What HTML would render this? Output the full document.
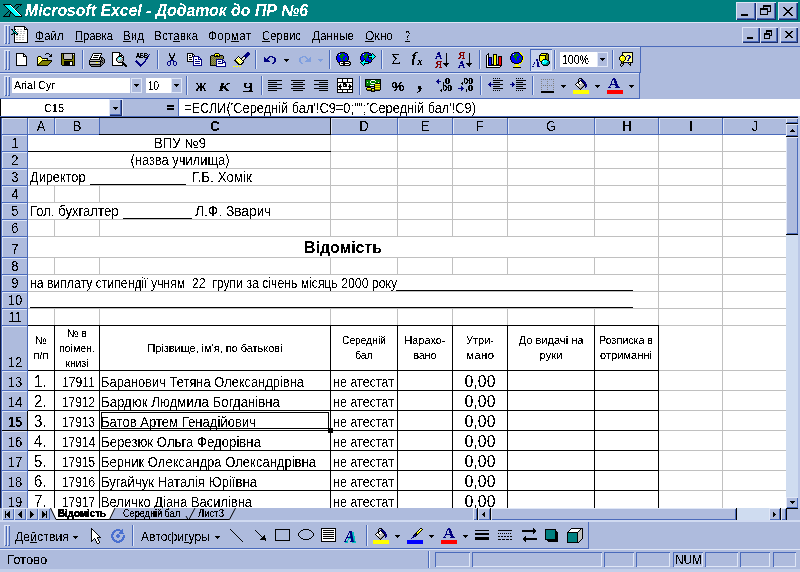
<!DOCTYPE html>
<html><head><meta charset="utf-8"><title>Microsoft Excel</title>
<style>
html,body{margin:0;padding:0;}
body{width:800px;height:572px;overflow:hidden;background:#aebbdd;position:relative;font-family:"Liberation Sans", sans-serif;color:#000;}
#w{position:absolute;left:0;top:0;width:800px;height:572px;overflow:hidden;}
#w div,#w span.t,#w svg{position:absolute;}
span.t{white-space:pre;}
#w .gt{left:0;top:118px;width:786px;height:390px;overflow:hidden;}
#w .ot{left:0;top:0;width:800px;height:572px;}
.tf{left:0;top:0;width:100%;height:100%;filter:url(#th);}
.tf.s{filter:url(#ths);}
.tf.x{filter:url(#thx);}
u{text-decoration:underline;}
</style></head><body><div id="w">
<svg width="0" height="0" style="left:0;top:0"><filter id="th" x="0" y="0" width="100%" height="100%" color-interpolation-filters="sRGB"><feComponentTransfer><feFuncA type="discrete" tableValues="0 1"/></feComponentTransfer></filter><filter id="thx" x="0" y="0" width="100%" height="100%" color-interpolation-filters="sRGB"><feComponentTransfer><feFuncA type="discrete" tableValues="0 0 0 1 1 1 1 1"/></feComponentTransfer></filter><filter id="ths" x="0" y="0" width="100%" height="100%" color-interpolation-filters="sRGB"><feComponentTransfer><feFuncA type="discrete" tableValues="0 0 0 0 0 0 0 0 0 1 1 1 1 1 1 1 1 1 1 1"/></feComponentTransfer></filter></svg>
<div style="left:0px;top:0px;width:800px;height:22px;background:#008080;"></div>
<div style="left:736px;top:2px;width:20px;height:18px;background:#aebbdd;box-shadow:inset 1px 1px 0 #dfe6f6, inset -1px -1px 0 #1c2c66, inset -2px -2px 0 #4a6abb;"></div>
<div style="left:756px;top:2px;width:20px;height:18px;background:#aebbdd;box-shadow:inset 1px 1px 0 #dfe6f6, inset -1px -1px 0 #1c2c66, inset -2px -2px 0 #4a6abb;"></div>
<div style="left:778px;top:2px;width:20px;height:18px;background:#aebbdd;box-shadow:inset 1px 1px 0 #dfe6f6, inset -1px -1px 0 #1c2c66, inset -2px -2px 0 #4a6abb;"></div>
<div style="left:742px;top:27px;width:18px;height:16px;background:#aebbdd;box-shadow:inset 1px 1px 0 #dfe6f6, inset -1px -1px 0 #1c2c66, inset -2px -2px 0 #4a6abb;"></div>
<div style="left:760px;top:27px;width:18px;height:16px;background:#aebbdd;box-shadow:inset 1px 1px 0 #dfe6f6, inset -1px -1px 0 #1c2c66, inset -2px -2px 0 #4a6abb;"></div>
<div style="left:780px;top:27px;width:18px;height:16px;background:#aebbdd;box-shadow:inset 1px 1px 0 #dfe6f6, inset -1px -1px 0 #1c2c66, inset -2px -2px 0 #4a6abb;"></div>
<div style="left:0px;top:22px;width:800px;height:1px;background:#dfe6f6;"></div>
<div style="left:0px;top:46px;width:800px;height:1px;background:#4a6abb;"></div>
<div style="left:0px;top:47px;width:641px;height:1px;background:#dfe6f6;"></div>
<div style="left:4px;top:25px;width:3px;height:19px;background:#aebbdd;box-shadow:inset 1px 1px 0 #dfe6f6, inset -1px -1px 0 #4a6abb;"></div>
<div style="left:7px;top:25px;width:3px;height:19px;background:#aebbdd;box-shadow:inset 1px 1px 0 #dfe6f6, inset -1px -1px 0 #4a6abb;"></div>
<div style="left:0px;top:72px;width:641px;height:1px;background:#4a6abb;"></div>
<div style="left:0px;top:73px;width:640px;height:1px;background:#dfe6f6;"></div>
<div style="left:640px;top:47px;width:1px;height:26px;background:#4a6abb;"></div>
<div style="left:0px;top:98px;width:640px;height:1px;background:#4a6abb;"></div>
<div style="left:639px;top:73px;width:1px;height:26px;background:#4a6abb;"></div>
<div style="left:4px;top:50px;width:3px;height:20px;background:#aebbdd;box-shadow:inset 1px 1px 0 #dfe6f6, inset -1px -1px 0 #4a6abb;"></div>
<div style="left:7px;top:50px;width:3px;height:20px;background:#aebbdd;box-shadow:inset 1px 1px 0 #dfe6f6, inset -1px -1px 0 #4a6abb;"></div>
<div style="left:4px;top:76px;width:3px;height:20px;background:#aebbdd;box-shadow:inset 1px 1px 0 #dfe6f6, inset -1px -1px 0 #4a6abb;"></div>
<div style="left:7px;top:76px;width:3px;height:20px;background:#aebbdd;box-shadow:inset 1px 1px 0 #dfe6f6, inset -1px -1px 0 #4a6abb;"></div>
<div style="left:82px;top:50px;width:1px;height:19px;background:#4a6abb;"></div>
<div style="left:83px;top:50px;width:1px;height:19px;background:#dfe6f6;"></div>
<div style="left:157px;top:50px;width:1px;height:19px;background:#4a6abb;"></div>
<div style="left:158px;top:50px;width:1px;height:19px;background:#dfe6f6;"></div>
<div style="left:255px;top:50px;width:1px;height:19px;background:#4a6abb;"></div>
<div style="left:256px;top:50px;width:1px;height:19px;background:#dfe6f6;"></div>
<div style="left:329px;top:50px;width:1px;height:19px;background:#4a6abb;"></div>
<div style="left:330px;top:50px;width:1px;height:19px;background:#dfe6f6;"></div>
<div style="left:381px;top:50px;width:1px;height:19px;background:#4a6abb;"></div>
<div style="left:382px;top:50px;width:1px;height:19px;background:#dfe6f6;"></div>
<div style="left:479px;top:50px;width:1px;height:19px;background:#4a6abb;"></div>
<div style="left:480px;top:50px;width:1px;height:19px;background:#dfe6f6;"></div>
<div style="left:554px;top:50px;width:1px;height:19px;background:#4a6abb;"></div>
<div style="left:555px;top:50px;width:1px;height:19px;background:#dfe6f6;"></div>
<div style="left:612px;top:50px;width:1px;height:19px;background:#4a6abb;"></div>
<div style="left:613px;top:50px;width:1px;height:19px;background:#dfe6f6;"></div>
<div style="left:186px;top:76px;width:1px;height:19px;background:#4a6abb;"></div>
<div style="left:187px;top:76px;width:1px;height:19px;background:#dfe6f6;"></div>
<div style="left:261px;top:76px;width:1px;height:19px;background:#4a6abb;"></div>
<div style="left:262px;top:76px;width:1px;height:19px;background:#dfe6f6;"></div>
<div style="left:359px;top:76px;width:1px;height:19px;background:#4a6abb;"></div>
<div style="left:360px;top:76px;width:1px;height:19px;background:#dfe6f6;"></div>
<div style="left:480px;top:76px;width:1px;height:19px;background:#4a6abb;"></div>
<div style="left:481px;top:76px;width:1px;height:19px;background:#dfe6f6;"></div>
<div style="left:532px;top:76px;width:1px;height:19px;background:#4a6abb;"></div>
<div style="left:533px;top:76px;width:1px;height:19px;background:#dfe6f6;"></div>
<div style="left:12px;top:78px;width:118px;height:15px;background:#fff;"></div>
<div style="left:131px;top:78px;width:11px;height:15px;background:#aebbdd;box-shadow:inset 0 0 0 1px #dfe6f6;"></div>
<svg style="left:134px;top:84px" width="5" height="3" viewBox="0 0 5 3" shape-rendering="crispEdges" ><path d="M0 0h5v1H0zM1 1h3v1H1zM2 2h1v1H2z" fill="#000"/></svg>
<div style="left:146px;top:78px;width:25px;height:15px;background:#fff;"></div>
<div style="left:171px;top:78px;width:11px;height:15px;background:#aebbdd;box-shadow:inset 0 0 0 1px #dfe6f6;"></div>
<svg style="left:174px;top:84px" width="5" height="3" viewBox="0 0 5 3" shape-rendering="crispEdges" ><path d="M0 0h5v1H0zM1 1h3v1H1zM2 2h1v1H2z" fill="#000"/></svg>
<div style="left:560px;top:52px;width:37px;height:15px;background:#fff;"></div>
<div style="left:597px;top:52px;width:11px;height:15px;background:#aebbdd;box-shadow:inset 0 0 0 1px #dfe6f6;"></div>
<svg style="left:600px;top:58px" width="5" height="3" viewBox="0 0 5 3" shape-rendering="crispEdges" ><path d="M0 0h5v1H0zM1 1h3v1H1zM2 2h1v1H2z" fill="#000"/></svg>
<svg style="left:16px;top:53px" width="11" height="13" viewBox="0 0 11 13" shape-rendering="crispEdges"><path fill="#000" d="M0 0h8v1H0zM0 1h1v1H0zM7 1h2v1H7zM0 2h1v1H0zM7 2h1v1H7zM9 2h1v1H9zM0 3h1v1H0zM7 3h4v1H7zM0 4h1v1H0zM10 4h1v1H10zM0 5h1v1H0zM10 5h1v1H10zM0 6h1v1H0zM10 6h1v1H10zM0 7h1v1H0zM10 7h1v1H10zM0 8h1v1H0zM10 8h1v1H10zM0 9h1v1H0zM10 9h1v1H10zM0 10h1v1H0zM10 10h1v1H10zM0 11h1v1H0zM10 11h1v1H10zM0 12h11v1H0z"/><path fill="#fff" d="M1 1h6v1H1zM1 2h6v1H1zM8 2h1v1H8zM1 3h6v1H1zM1 4h9v1H1zM1 5h9v1H1zM1 6h9v1H1zM1 7h9v1H1zM1 8h9v1H1zM1 9h9v1H1zM1 10h9v1H1zM1 11h9v1H1z"/></svg>
<svg style="left:37px;top:53px" width="16" height="13" viewBox="0 0 16 13" shape-rendering="crispEdges"><path fill="#000" d="M9 0h3v1H9zM8 1h1v1H8zM12 1h1v1H12zM14 1h1v1H14zM13 2h2v1H13zM1 3h3v1H1zM12 3h3v1H12zM0 4h1v1H0zM4 4h1v1H4zM0 5h1v1H0zM5 5h6v1H5zM0 6h1v1H0zM10 6h1v1H10zM0 7h1v1H0zM5 7h10v1H5zM0 8h1v1H0zM4 8h1v1H4zM14 8h1v1H14zM0 9h1v1H0zM3 9h1v1H3zM13 9h1v1H13zM0 10h1v1H0zM2 10h1v1H2zM12 10h1v1H12zM0 11h2v1H0zM11 11h1v1H11zM0 12h11v1H0z"/><path fill="#ffff00" d="M1 4h1v1H1zM3 4h1v1H3zM2 5h1v1H2zM4 5h1v1H4zM1 6h1v1H1zM3 6h1v1H3zM5 6h1v1H5zM7 6h1v1H7zM9 6h1v1H9zM2 7h1v1H2zM4 7h1v1H4zM1 8h1v1H1zM3 8h1v1H3zM2 9h1v1H2zM1 10h1v1H1z"/><path fill="#fff" d="M2 4h1v1H2zM1 5h1v1H1zM3 5h1v1H3zM2 6h1v1H2zM4 6h1v1H4zM6 6h1v1H6zM8 6h1v1H8zM1 7h1v1H1zM3 7h1v1H3zM2 8h1v1H2zM1 9h1v1H1z"/><path fill="#808000" d="M5 8h9v1H5zM4 9h9v1H4zM3 10h9v1H3zM2 11h9v1H2z"/></svg>
<svg style="left:61px;top:53px" width="14" height="13" viewBox="0 0 14 13" shape-rendering="crispEdges"><path fill="#000" d="M0 0h14v1H0zM0 1h1v1H0zM2 1h1v1H2zM11 1h1v1H11zM13 1h1v1H13zM0 2h1v1H0zM2 2h1v1H2zM11 2h1v1H11zM13 2h1v1H13zM0 3h1v1H0zM2 3h1v1H2zM11 3h1v1H11zM13 3h1v1H13zM0 4h1v1H0zM2 4h1v1H2zM11 4h1v1H11zM13 4h1v1H13zM0 5h1v1H0zM2 5h1v1H2zM11 5h1v1H11zM13 5h1v1H13zM0 6h1v1H0zM3 6h8v1H3zM13 6h1v1H13zM0 7h1v1H0zM13 7h1v1H13zM0 8h1v1H0zM3 8h9v1H3zM13 8h1v1H13zM0 9h1v1H0zM3 9h6v1H3zM11 9h1v1H11zM13 9h1v1H13zM0 10h1v1H0zM3 10h6v1H3zM11 10h1v1H11zM13 10h1v1H13zM0 11h1v1H0zM3 11h6v1H3zM11 11h1v1H11zM13 11h1v1H13zM1 12h13v1H1z"/><path fill="#808000" d="M1 1h1v1H1zM1 2h1v1H1zM12 2h1v1H12zM1 3h1v1H1zM12 3h1v1H12zM1 4h1v1H1zM12 4h1v1H12zM1 5h1v1H1zM12 5h1v1H12zM1 6h2v1H1zM11 6h2v1H11zM1 7h12v1H1zM1 8h2v1H1zM12 8h1v1H12zM1 9h2v1H1zM12 9h1v1H12zM1 10h2v1H1zM12 10h1v1H12zM1 11h2v1H1zM12 11h1v1H12z"/><path fill="#c0c0c0" d="M3 1h8v1H3zM3 2h8v1H3zM3 3h8v1H3zM3 4h8v1H3zM3 5h8v1H3z"/><path fill="#fff" d="M12 1h1v1H12zM9 9h2v1H9zM9 10h2v1H9zM9 11h2v1H9z"/></svg>
<svg style="left:89px;top:53px" width="16" height="14" viewBox="0 0 16 14" shape-rendering="crispEdges"><path fill="#000" d="M4 0h9v1H4zM3 1h1v1H3zM12 1h1v1H12zM3 2h1v1H3zM5 2h5v1H5zM11 2h1v1H11zM2 3h1v1H2zM11 3h1v1H11zM2 4h1v1H2zM4 4h5v1H4zM10 4h4v1H10zM1 5h1v1H1zM10 5h1v1H10zM12 5h1v1H12zM14 5h1v1H14zM1 6h10v1H1zM12 6h1v1H12zM15 6h1v1H15zM0 7h1v1H0zM11 7h1v1H11zM13 7h1v1H13zM15 7h1v1H15zM0 8h13v1H0zM15 8h1v1H15zM0 9h1v1H0zM11 9h1v1H11zM13 9h1v1H13zM15 9h1v1H15zM0 10h1v1H0zM11 10h1v1H11zM14 10h1v1H14zM0 11h12v1H0zM13 11h1v1H13zM1 12h1v1H1zM11 12h2v1H11zM2 13h10v1H2z"/><path fill="#fff" d="M4 1h8v1H4zM4 2h1v1H4zM10 2h1v1H10zM3 3h8v1H3zM3 4h1v1H3zM9 4h1v1H9zM2 5h8v1H2z"/><path fill="#c0c0c0" d="M11 5h1v1H11zM11 6h1v1H11zM1 7h10v1H1zM1 9h6v1H1zM9 9h2v1H9zM1 10h10v1H1z"/><path fill="#808080" d="M13 5h1v1H13zM13 6h2v1H13zM12 7h1v1H12zM14 7h1v1H14zM13 8h2v1H13zM12 9h1v1H12zM14 9h1v1H14zM12 10h2v1H12zM12 11h1v1H12zM2 12h9v1H2z"/><path fill="#ffff00" d="M7 9h2v1H7z"/></svg>
<svg style="left:112px;top:52px" width="16" height="15" viewBox="0 0 16 15" shape-rendering="crispEdges"><path fill="#000" d="M0 0h8v1H0zM0 1h1v1H0zM7 1h2v1H7zM0 2h1v1H0zM7 2h1v1H7zM9 2h1v1H9zM0 3h1v1H0zM7 3h4v1H7zM0 4h1v1H0zM6 4h4v1H6zM11 4h1v1H11zM0 5h1v1H0zM5 5h1v1H5zM10 5h2v1H10zM0 6h1v1H0zM4 6h1v1H4zM11 6h1v1H11zM0 7h1v1H0zM4 7h1v1H4zM11 7h1v1H11zM0 8h1v1H0zM4 8h1v1H4zM11 8h1v1H11zM0 9h1v1H0zM5 9h1v1H5zM10 9h1v1H10zM0 10h1v1H0zM6 10h6v1H6zM0 11h1v1H0zM10 11h3v1H10zM0 12h1v1H0zM10 12h4v1H10zM0 13h11v1H0zM12 13h3v1H12zM13 14h2v1H13z"/><path fill="#fff" d="M1 1h6v1H1zM1 2h6v1H1zM8 2h1v1H8zM1 3h6v1H1zM1 4h5v1H1zM10 4h1v1H10zM1 5h4v1H1zM8 5h1v1H8zM1 6h3v1H1zM7 6h1v1H7zM1 7h3v1H1zM6 7h1v1H6zM1 8h3v1H1zM1 9h4v1H1zM1 10h5v1H1zM1 11h9v1H1zM1 12h9v1H1z"/><path fill="#808080" d="M6 5h1v1H6zM5 6h1v1H5zM10 7h1v1H10zM9 8h1v1H9zM8 9h1v1H8z"/><path fill="#00ffff" d="M7 5h1v1H7zM6 6h1v1H6zM8 6h1v1H8zM7 7h1v1H7z"/><path fill="#c0c0c0" d="M9 5h1v1H9zM9 6h2v1H9zM5 7h1v1H5zM8 7h2v1H8zM5 8h4v1H5zM10 8h1v1H10zM6 9h2v1H6zM9 9h1v1H9z"/></svg>
<svg style="left:135px;top:53px" width="15" height="14" viewBox="0 0 15 14" shape-rendering="crispEdges"><path fill="#000080" d="M14 1h1v1H14zM13 2h1v1H13zM12 3h2v1H12zM12 4h1v1H12zM11 5h2v1H11zM10 6h2v1H10zM1 7h1v1H1zM10 7h1v1H10zM0 8h3v1H0zM9 8h2v1H9zM1 9h3v1H1zM8 9h2v1H8zM2 10h3v1H2zM7 10h2v1H7zM3 11h5v1H3zM4 12h3v1H4zM5 13h1v1H5z"/></svg>
<svg style="left:167px;top:53px" width="10" height="13" viewBox="0 0 10 13" shape-rendering="crispEdges"><path fill="#000" d="M2 0h1v1H2zM7 0h1v1H7zM2 1h1v1H2zM7 1h1v1H7zM2 2h2v1H2zM6 2h2v1H6zM3 3h1v1H3zM6 3h1v1H6zM3 4h4v1H3zM4 5h2v1H4zM4 6h2v1H4z"/><path fill="#000080" d="M3 7h4v1H3zM1 8h3v1H1zM6 8h3v1H6zM0 9h1v1H0zM3 9h1v1H3zM6 9h1v1H6zM9 9h1v1H9zM0 10h1v1H0zM3 10h1v1H3zM6 10h1v1H6zM9 10h1v1H9zM0 11h1v1H0zM3 11h1v1H3zM6 11h1v1H6zM9 11h1v1H9zM1 12h2v1H1zM7 12h2v1H7z"/></svg>
<svg style="left:187px;top:53px" width="15" height="13" viewBox="0 0 15 13" shape-rendering="crispEdges"><path fill="#000" d="M0 0h6v1H0zM0 1h1v1H0zM5 1h2v1H5zM0 2h1v1H0zM2 2h2v1H2zM5 2h1v1H5zM7 2h1v1H7zM0 3h1v1H0zM5 3h1v1H5zM0 4h1v1H0zM2 4h3v1H2zM0 5h1v1H0zM0 6h1v1H0zM2 6h3v1H2zM0 7h1v1H0zM0 8h6v1H0z"/><path fill="#fff" d="M1 1h4v1H1zM1 2h1v1H1zM4 2h1v1H4zM6 2h1v1H6zM1 3h4v1H1zM1 4h1v1H1zM5 4h1v1H5zM7 4h4v1H7zM1 5h5v1H1zM7 5h4v1H7zM12 5h1v1H12zM1 6h1v1H1zM5 6h1v1H5zM7 6h1v1H7zM10 6h1v1H10zM1 7h5v1H1zM7 7h7v1H7zM7 8h1v1H7zM13 8h1v1H13zM7 9h7v1H7zM7 10h1v1H7zM13 10h1v1H13zM7 11h7v1H7z"/><path fill="#000080" d="M6 3h6v1H6zM6 4h1v1H6zM11 4h2v1H11zM6 5h1v1H6zM11 5h1v1H11zM13 5h1v1H13zM6 6h1v1H6zM8 6h2v1H8zM11 6h4v1H11zM6 7h1v1H6zM14 7h1v1H14zM6 8h1v1H6zM8 8h5v1H8zM14 8h1v1H14zM6 9h1v1H6zM14 9h1v1H14zM6 10h1v1H6zM8 10h5v1H8zM14 10h1v1H14zM6 11h1v1H6zM14 11h1v1H14zM6 12h9v1H6z"/></svg>
<svg style="left:210px;top:53px" width="16" height="14" viewBox="0 0 16 14" shape-rendering="crispEdges"><path fill="#000" d="M5 0h4v1H5zM4 1h1v1H4zM9 1h1v1H9zM1 2h4v1H1zM6 2h2v1H6zM9 2h4v1H9zM0 3h1v1H0zM4 3h6v1H4zM13 3h1v1H13zM0 4h1v1H0zM13 4h1v1H13zM0 5h1v1H0zM13 5h1v1H13zM0 6h1v1H0zM0 7h1v1H0zM0 8h1v1H0zM0 9h1v1H0zM0 10h1v1H0zM0 11h1v1H0zM0 12h6v1H0z"/><path fill="#ffff00" d="M5 1h4v1H5zM5 2h1v1H5zM8 2h1v1H8z"/><path fill="#808080" d="M1 3h1v1H1zM3 3h1v1H3zM10 3h1v1H10zM12 3h1v1H12zM2 4h1v1H2zM4 4h1v1H4zM6 4h1v1H6zM8 4h1v1H8zM10 4h1v1H10zM12 4h1v1H12zM1 5h1v1H1zM3 5h1v1H3zM5 5h1v1H5zM7 5h1v1H7zM9 5h1v1H9zM11 5h1v1H11zM2 6h1v1H2zM4 6h1v1H4zM1 7h1v1H1zM3 7h1v1H3zM5 7h1v1H5zM2 8h1v1H2zM4 8h1v1H4zM1 9h1v1H1zM3 9h1v1H3zM5 9h1v1H5zM2 10h1v1H2zM4 10h1v1H4zM1 11h1v1H1zM3 11h1v1H3zM5 11h1v1H5z"/><path fill="#808000" d="M2 3h1v1H2zM11 3h1v1H11zM1 4h1v1H1zM3 4h1v1H3zM5 4h1v1H5zM7 4h1v1H7zM9 4h1v1H9zM11 4h1v1H11zM2 5h1v1H2zM4 5h1v1H4zM6 5h1v1H6zM8 5h1v1H8zM10 5h1v1H10zM12 5h1v1H12zM1 6h1v1H1zM3 6h1v1H3zM5 6h1v1H5zM2 7h1v1H2zM4 7h1v1H4zM1 8h1v1H1zM3 8h1v1H3zM5 8h1v1H5zM2 9h1v1H2zM4 9h1v1H4zM1 10h1v1H1zM3 10h1v1H3zM5 10h1v1H5zM2 11h1v1H2zM4 11h1v1H4z"/><path fill="#000080" d="M6 6h7v1H6zM6 7h1v1H6zM12 7h2v1H12zM6 8h1v1H6zM8 8h3v1H8zM12 8h1v1H12zM14 8h1v1H14zM6 9h1v1H6zM12 9h4v1H12zM6 10h1v1H6zM8 10h5v1H8zM15 10h1v1H15zM6 11h1v1H6zM15 11h1v1H15zM6 12h1v1H6zM15 12h1v1H15zM6 13h10v1H6z"/><path fill="#fff" d="M7 7h5v1H7zM7 8h1v1H7zM11 8h1v1H11zM13 8h1v1H13zM7 9h5v1H7zM7 10h1v1H7zM13 10h2v1H13zM7 11h8v1H7zM7 12h8v1H7z"/></svg>
<svg style="left:233px;top:52px" width="17" height="16" viewBox="0 0 17 16" shape-rendering="crispEdges"><path fill="#000080" d="M14 0h2v1H14zM13 1h4v1H13zM12 2h5v1H12zM11 3h5v1H11zM11 4h4v1H11zM13 5h1v1H13z"/><path fill="#000" d="M5 4h1v1H5zM10 4h1v1H10zM4 5h1v1H4zM6 5h1v1H6zM9 5h1v1H9zM12 5h1v1H12zM3 6h1v1H3zM7 6h2v1H7zM12 6h1v1H12zM2 7h1v1H2zM8 7h1v1H8zM11 7h1v1H11zM1 8h2v1H1zM9 8h2v1H9zM2 9h2v1H2zM10 9h1v1H10zM3 10h2v1H3zM9 10h2v1H9zM4 11h2v1H4zM8 11h2v1H8zM5 12h4v1H5z"/><path fill="#fff" d="M5 5h1v1H5zM11 5h1v1H11zM4 6h1v1H4zM6 6h1v1H6zM10 6h1v1H10zM3 7h1v1H3zM5 7h1v1H5zM7 7h1v1H7zM9 7h1v1H9zM4 8h1v1H4zM6 8h1v1H6zM8 8h1v1H8zM5 9h1v1H5zM7 9h1v1H7zM9 9h1v1H9zM6 10h1v1H6zM8 10h1v1H8zM7 11h1v1H7z"/><path fill="#c0c0c0" d="M10 5h1v1H10zM9 6h1v1H9zM11 6h1v1H11zM10 7h1v1H10z"/><path fill="#ffff00" d="M5 6h1v1H5zM4 7h1v1H4zM6 7h1v1H6zM3 8h1v1H3zM5 8h1v1H5zM7 8h1v1H7zM4 9h1v1H4zM6 9h1v1H6zM8 9h1v1H8zM5 10h1v1H5zM7 10h1v1H7zM6 11h1v1H6zM0 14h2v1H0zM3 14h2v1H3zM6 14h2v1H6z"/></svg>
<svg style="left:264px;top:56px" width="13" height="8" viewBox="0 0 13 8" shape-rendering="crispEdges"><path fill="#000080" d="M5 0h4v1H5zM0 1h1v1H0zM4 1h2v1H4zM8 1h3v1H8zM0 2h2v1H0zM3 2h2v1H3zM10 2h2v1H10zM0 3h4v1H0zM10 3h2v1H10zM0 4h5v1H0zM10 4h2v1H10zM0 5h6v1H0zM10 5h2v1H10zM9 6h2v1H9zM8 7h2v1H8z"/></svg>
<svg style="left:284px;top:59px" width="5" height="3" viewBox="0 0 5 3" shape-rendering="crispEdges" ><path d="M0 0h5v1H0zM1 1h3v1H1zM2 2h1v1H2z" fill="#000"/></svg>
<svg style="left:298px;top:56px" width="13" height="8" viewBox="0 0 13 8" shape-rendering="crispEdges"><path fill="#7f9fdf" d="M4 0h4v1H4zM2 1h3v1H2zM7 1h2v1H7zM12 1h1v1H12zM1 2h2v1H1zM8 2h2v1H8zM11 2h2v1H11zM1 3h2v1H1zM9 3h4v1H9zM1 4h2v1H1zM8 4h5v1H8zM1 5h2v1H1zM7 5h6v1H7zM2 6h2v1H2zM3 7h2v1H3z"/></svg>
<svg style="left:318px;top:59px" width="5" height="3" viewBox="0 0 5 3" shape-rendering="crispEdges" ><path d="M0 0h5v1H0zM1 1h3v1H1zM2 2h1v1H2z" fill="#7f9fdf"/></svg>
<svg style="left:336px;top:52px" width="15" height="14" viewBox="0 0 15 14" shape-rendering="crispEdges"><path fill="#000" d="M4 0h5v1H4zM2 1h2v1H2zM9 1h2v1H9zM1 2h1v1H1zM11 2h1v1H11zM1 3h1v1H1zM11 3h1v1H11zM0 4h1v1H0zM12 4h1v1H12zM0 5h1v1H0zM12 5h1v1H12zM0 6h1v1H0zM12 6h1v1H12zM0 7h1v1H0zM12 7h1v1H12zM1 8h1v1H1zM11 8h1v1H11zM1 9h1v1H1zM4 9h10v1H4zM2 10h2v1H2zM7 10h2v1H7zM13 10h2v1H13zM3 11h1v1H3zM5 11h8v1H5zM14 11h1v1H14zM3 12h1v1H3zM7 12h2v1H7zM13 12h2v1H13zM4 13h10v1H4z"/><path fill="#0000ff" d="M4 1h2v1H4zM7 1h2v1H7zM2 2h1v1H2zM4 2h1v1H4zM8 2h3v1H8zM2 3h2v1H2zM9 3h2v1H9zM1 4h2v1H1zM7 4h5v1H7zM1 5h3v1H1zM7 5h3v1H7zM11 5h1v1H11zM1 6h4v1H1zM6 6h3v1H6zM11 6h1v1H11zM1 7h4v1H1zM7 7h2v1H7zM11 7h1v1H11zM2 8h4v1H2zM7 8h4v1H7zM2 9h2v1H2z"/><path fill="#008000" d="M6 1h1v1H6zM5 2h3v1H5zM4 3h5v1H4zM3 4h4v1H3zM4 5h3v1H4zM10 5h1v1H10zM5 6h1v1H5zM9 6h2v1H9zM5 7h2v1H5zM9 7h2v1H9zM6 8h1v1H6z"/><path fill="#fff" d="M3 2h1v1H3zM4 10h3v1H4zM9 10h4v1H9zM4 11h1v1H4zM13 11h1v1H13zM4 12h3v1H4zM9 12h4v1H9z"/></svg>
<svg style="left:360px;top:52px" width="16" height="14" viewBox="0 0 16 14" shape-rendering="crispEdges"><path fill="#000" d="M4 0h5v1H4zM2 1h2v1H2zM9 1h2v1H9zM12 1h1v1H12zM1 2h1v1H1zM11 2h1v1H11zM13 2h1v1H13zM1 3h1v1H1zM8 3h4v1H8zM14 3h1v1H14zM0 4h1v1H0zM8 4h1v1H8zM15 4h1v1H15zM0 5h1v1H0zM8 5h4v1H8zM14 5h1v1H14zM0 6h1v1H0zM11 6h1v1H11zM13 6h1v1H13zM0 7h1v1H0zM4 7h1v1H4zM12 7h1v1H12zM1 8h1v1H1zM3 8h1v1H3zM5 8h1v1H5zM11 8h1v1H11zM1 9h2v1H1zM5 9h4v1H5zM11 9h1v1H11zM0 10h1v1H0zM8 10h3v1H8zM1 11h1v1H1zM4 11h5v1H4zM2 12h1v1H2zM4 12h1v1H4zM3 13h1v1H3z"/><path fill="#0000ff" d="M4 1h2v1H4zM7 1h2v1H7zM2 2h1v1H2zM4 2h1v1H4zM8 2h3v1H8zM2 3h2v1H2zM1 4h2v1H1zM7 4h1v1H7zM1 5h3v1H1zM7 5h1v1H7zM1 6h4v1H1zM6 6h3v1H6zM1 7h3v1H1zM6 7h3v1H6zM11 7h1v1H11zM2 8h1v1H2zM6 8h5v1H6zM9 9h2v1H9z"/><path fill="#008000" d="M6 1h1v1H6zM5 2h3v1H5zM4 3h4v1H4zM3 4h4v1H3zM4 5h3v1H4zM5 6h1v1H5zM9 6h2v1H9zM5 7h1v1H5zM9 7h2v1H9z"/><path fill="#fff" d="M3 2h1v1H3z"/><path fill="#00ffff" d="M12 2h1v1H12zM12 3h2v1H12zM9 4h6v1H9zM12 5h2v1H12zM12 6h1v1H12zM4 8h1v1H4zM3 9h2v1H3zM1 10h7v1H1zM2 11h2v1H2zM3 12h1v1H3z"/></svg>
<svg style="left:443px;top:53px" width="6" height="14" viewBox="0 0 6 14" shape-rendering="crispEdges"><path fill="#000" d="M3 0h1v1H3zM3 1h1v1H3zM3 2h1v1H3zM3 3h1v1H3zM3 4h1v1H3zM3 5h1v1H3zM3 6h1v1H3zM3 7h1v1H3zM3 8h1v1H3zM3 9h1v1H3zM0 10h6v1H0zM1 11h4v1H1zM2 12h2v1H2zM3 13h1v1H3z"/></svg>
<svg style="left:466px;top:53px" width="6" height="14" viewBox="0 0 6 14" shape-rendering="crispEdges"><path fill="#000" d="M3 0h1v1H3zM3 1h1v1H3zM3 2h1v1H3zM3 3h1v1H3zM3 4h1v1H3zM3 5h1v1H3zM3 6h1v1H3zM3 7h1v1H3zM3 8h1v1H3zM3 9h1v1H3zM0 10h6v1H0zM1 11h4v1H1zM2 12h2v1H2zM3 13h1v1H3z"/></svg>
<svg style="left:486px;top:53px" width="16" height="15" viewBox="0 0 16 15" shape-rendering="crispEdges"><path fill="#000" d="M2 0h1v1H2zM1 1h2v1H1zM7 1h4v1H7zM0 2h1v1H0zM2 2h1v1H2zM7 2h1v1H7zM10 2h1v1H10zM0 3h1v1H0zM2 3h1v1H2zM7 3h1v1H7zM10 3h1v1H10zM12 3h4v1H12zM0 4h1v1H0zM2 4h4v1H2zM7 4h1v1H7zM10 4h1v1H10zM12 4h1v1H12zM15 4h1v1H15zM0 5h1v1H0zM2 5h1v1H2zM5 5h1v1H5zM7 5h1v1H7zM10 5h1v1H10zM12 5h1v1H12zM15 5h1v1H15zM0 6h1v1H0zM2 6h1v1H2zM5 6h1v1H5zM7 6h1v1H7zM10 6h1v1H10zM12 6h1v1H12zM15 6h1v1H15zM0 7h1v1H0zM2 7h1v1H2zM5 7h1v1H5zM7 7h1v1H7zM10 7h1v1H10zM12 7h1v1H12zM15 7h1v1H15zM0 8h1v1H0zM2 8h1v1H2zM5 8h1v1H5zM7 8h1v1H7zM10 8h1v1H10zM12 8h1v1H12zM15 8h1v1H15zM0 9h1v1H0zM2 9h1v1H2zM5 9h1v1H5zM7 9h1v1H7zM10 9h1v1H10zM12 9h1v1H12zM15 9h1v1H15zM0 10h1v1H0zM2 10h1v1H2zM5 10h1v1H5zM7 10h1v1H7zM10 10h1v1H10zM12 10h1v1H12zM15 10h1v1H15zM0 11h1v1H0zM2 11h1v1H2zM5 11h3v1H5zM10 11h3v1H10zM15 11h1v1H15zM0 12h1v1H0zM2 12h14v1H2zM0 13h1v1H0zM14 13h1v1H14zM0 14h14v1H0z"/><path fill="#fff" d="M1 2h1v1H1zM1 3h1v1H1zM1 4h1v1H1zM1 5h1v1H1zM1 6h1v1H1zM1 7h1v1H1zM1 8h1v1H1zM1 9h1v1H1zM1 10h1v1H1zM1 11h1v1H1zM1 12h1v1H1zM1 13h13v1H1z"/><path fill="#ffff00" d="M8 2h2v1H8zM8 3h2v1H8zM8 4h2v1H8zM8 5h2v1H8zM8 6h2v1H8zM8 7h2v1H8zM8 8h2v1H8zM8 9h2v1H8zM8 10h2v1H8zM8 11h2v1H8z"/><path fill="#ff0000" d="M13 4h2v1H13zM13 5h2v1H13zM13 6h2v1H13zM13 7h2v1H13zM13 8h2v1H13zM13 9h2v1H13zM13 10h2v1H13zM13 11h2v1H13z"/><path fill="#0000ff" d="M3 5h2v1H3zM3 6h2v1H3zM3 7h2v1H3zM3 8h2v1H3zM3 9h2v1H3zM3 10h2v1H3zM3 11h2v1H3z"/></svg>
<svg style="left:510px;top:52px" width="14" height="16" viewBox="0 0 14 16" shape-rendering="crispEdges"><path fill="#000" d="M4 0h5v1H4zM2 1h2v1H2zM9 1h1v1H9zM1 2h1v1H1zM10 2h1v1H10zM1 3h1v1H1zM11 3h1v1H11zM0 4h1v1H0zM12 4h1v1H12zM0 5h1v1H0zM12 5h1v1H12zM0 6h1v1H0zM12 6h1v1H12zM0 7h1v1H0zM12 7h1v1H12zM1 8h1v1H1zM11 8h1v1H11zM1 9h1v1H1zM11 9h1v1H11zM2 10h2v1H2zM9 10h2v1H9zM4 11h5v1H4zM3 15h8v1H3z"/><path fill="#ffff00" d="M10 0h1v1H10zM10 1h2v1H10zM11 2h1v1H11zM12 3h1v1H12zM13 4h1v1H13zM13 5h1v1H13zM13 6h1v1H13zM13 7h1v1H13zM12 8h1v1H12zM12 9h1v1H12zM11 10h1v1H11zM9 11h2v1H9zM5 12h4v1H5zM6 13h2v1H6zM4 14h6v1H4z"/><path fill="#0000ff" d="M4 1h2v1H4zM7 1h2v1H7zM2 2h1v1H2zM4 2h1v1H4zM8 2h2v1H8zM2 3h2v1H2zM9 3h2v1H9zM1 4h2v1H1zM7 4h5v1H7zM1 5h3v1H1zM7 5h3v1H7zM11 5h1v1H11zM1 6h4v1H1zM6 6h3v1H6zM11 6h1v1H11zM1 7h4v1H1zM7 7h2v1H7zM11 7h1v1H11zM2 8h4v1H2zM7 8h4v1H7zM2 9h9v1H2zM4 10h5v1H4z"/><path fill="#008000" d="M6 1h1v1H6zM5 2h3v1H5zM4 3h5v1H4zM3 4h4v1H3zM4 5h3v1H4zM10 5h1v1H10zM5 6h1v1H5zM9 6h2v1H9zM5 7h2v1H5zM9 7h2v1H9zM6 8h1v1H6z"/><path fill="#fff" d="M3 2h1v1H3z"/></svg>
<div style="left:530px;top:49px;width:22px;height:22px;background:#c6d1ec;box-shadow:inset 1px 1px 0 #4a6abb, inset -1px -1px 0 #dfe6f6;"></div>
<svg style="left:534px;top:53px" width="16" height="13" viewBox="0 0 16 13" shape-rendering="crispEdges"><path fill="#000" d="M7 0h7v1H7zM6 1h1v1H6zM12 1h1v1H12zM14 1h1v1H14zM5 2h7v1H5zM14 2h1v1H14zM5 3h1v1H5zM11 3h1v1H11zM14 3h1v1H14zM5 4h1v1H5zM11 4h1v1H11zM14 4h1v1H14zM5 5h1v1H5zM11 5h1v1H11zM14 5h1v1H14zM5 6h1v1H5zM9 6h4v1H9zM14 6h1v1H14zM5 7h1v1H5zM8 7h1v1H8zM13 7h2v1H13zM6 8h2v1H6zM15 8h1v1H15zM7 9h1v1H7zM15 9h1v1H15zM7 10h1v1H7zM15 10h1v1H15zM8 11h1v1H8zM14 11h1v1H14zM9 12h5v1H9z"/><path fill="#ffff00" d="M7 1h5v1H7zM6 3h5v1H6zM6 4h5v1H6zM6 5h5v1H6zM6 6h3v1H6zM6 7h2v1H6z"/><path fill="#808000" d="M13 1h1v1H13zM12 2h2v1H12zM12 3h2v1H12zM12 4h2v1H12zM12 5h2v1H12zM13 6h1v1H13z"/><path fill="#00ffff" d="M9 7h4v1H9zM8 8h1v1H8zM10 8h4v1H10zM8 9h5v1H8zM8 10h4v1H8z"/><path fill="#fff" d="M9 8h1v1H9z"/><path fill="#008080" d="M14 8h1v1H14zM13 9h2v1H13zM12 10h3v1H12zM9 11h5v1H9z"/></svg>
<svg style="left:619px;top:52px" width="15" height="15" viewBox="0 0 15 15" shape-rendering="crispEdges"><path fill="#000" d="M3 0h11v1H3zM3 1h1v1H3zM13 1h1v1H13zM3 2h1v1H3zM13 2h1v1H13zM2 3h3v1H2zM13 3h1v1H13zM1 4h1v1H1zM5 4h1v1H5zM13 4h1v1H13zM0 5h1v1H0zM6 5h1v1H6zM13 5h1v1H13zM0 6h1v1H0zM6 6h1v1H6zM13 6h1v1H13zM0 7h1v1H0zM6 7h1v1H6zM13 7h1v1H13zM1 8h1v1H1zM5 8h1v1H5zM13 8h1v1H13zM2 9h1v1H2zM4 9h1v1H4zM13 9h1v1H13zM2 10h1v1H2zM4 10h10v1H4zM2 11h3v1H2zM9 11h1v1H9zM11 11h1v1H11zM1 12h1v1H1zM4 12h1v1H4zM10 12h2v1H10zM1 13h1v1H1zM3 13h1v1H3zM11 13h1v1H11zM2 14h1v1H2z"/><path fill="#ffff99" d="M4 1h9v1H4zM4 2h9v1H4zM5 3h8v1H5zM6 4h7v1H6zM7 5h6v1H7zM7 6h6v1H7zM7 7h6v1H7zM6 8h7v1H6zM5 9h8v1H5zM10 11h1v1H10z"/><path fill="#ffff00" d="M2 4h3v1H2zM1 5h1v1H1zM3 5h3v1H3zM1 6h5v1H1zM1 7h5v1H1zM2 8h3v1H2z"/><path fill="#fff" d="M2 5h1v1H2z"/><path fill="#808000" d="M3 9h1v1H3zM3 10h1v1H3z"/></svg>
<div style="left:243px;top:91px;width:10px;height:1px;background:#000;"></div>
<svg style="left:268px;top:80px" width="14" height="11" viewBox="0 0 14 11" shape-rendering="crispEdges"><path fill="#000" d="M0 0h14v1H0zM0 2h9v1H0zM0 4h14v1H0zM0 6h9v1H0zM0 8h14v1H0zM0 10h9v1H0z"/></svg>
<svg style="left:291px;top:80px" width="14" height="11" viewBox="0 0 14 11" shape-rendering="crispEdges"><path fill="#000" d="M0 0h14v1H0zM2 2h10v1H2zM0 4h14v1H0zM2 6h10v1H2zM0 8h14v1H0zM2 10h10v1H2z"/></svg>
<svg style="left:314px;top:80px" width="14" height="11" viewBox="0 0 14 11" shape-rendering="crispEdges"><path fill="#000" d="M0 0h14v1H0zM5 2h9v1H5zM0 4h14v1H0zM5 6h9v1H5zM0 8h14v1H0zM5 10h9v1H5z"/></svg>
<svg style="left:337px;top:78px" width="16" height="15" viewBox="0 0 16 15" shape-rendering="crispEdges"><path fill="#000" d="M0 0h16v1H0zM0 1h1v1H0zM5 1h1v1H5zM10 1h1v1H10zM15 1h1v1H15zM0 2h1v1H0zM5 2h1v1H5zM10 2h1v1H10zM15 2h1v1H15zM0 3h1v1H0zM5 3h1v1H5zM10 3h1v1H10zM15 3h1v1H15zM0 4h16v1H0zM0 5h1v1H0zM15 5h1v1H15zM0 6h1v1H0zM3 6h1v1H3zM12 6h1v1H12zM15 6h1v1H15zM0 7h1v1H0zM2 7h2v1H2zM12 7h2v1H12zM15 7h1v1H15zM0 8h5v1H0zM11 8h5v1H11zM0 9h1v1H0zM2 9h2v1H2zM12 9h2v1H12zM15 9h1v1H15zM0 10h1v1H0zM3 10h1v1H3zM12 10h1v1H12zM15 10h1v1H15zM0 11h16v1H0zM0 12h1v1H0zM5 12h1v1H5zM10 12h1v1H10zM15 12h1v1H15zM0 13h1v1H0zM5 13h1v1H5zM10 13h1v1H10zM15 13h1v1H15zM0 14h16v1H0z"/><path fill="#fff" d="M1 1h4v1H1zM6 1h4v1H6zM11 1h4v1H11zM1 2h4v1H1zM6 2h4v1H6zM11 2h4v1H11zM1 3h4v1H1zM6 3h4v1H6zM11 3h4v1H11zM1 5h14v1H1zM1 6h2v1H1zM4 6h8v1H4zM13 6h2v1H13zM1 7h1v1H1zM4 7h8v1H4zM14 7h1v1H14zM5 8h6v1H5zM1 9h1v1H1zM4 9h8v1H4zM14 9h1v1H14zM1 10h2v1H1zM4 10h8v1H4zM13 10h2v1H13zM1 12h4v1H1zM6 12h4v1H6zM11 12h4v1H11zM1 13h4v1H1zM6 13h4v1H6zM11 13h4v1H11z"/></svg>
<svg style="left:365px;top:79px" width="16" height="13" viewBox="0 0 16 13" shape-rendering="crispEdges"><path fill="#000" d="M0 0h16v1H0zM0 1h1v1H0zM15 1h1v1H15zM0 2h1v1H0zM15 2h1v1H15zM0 3h1v1H0zM15 3h1v1H15zM0 4h1v1H0zM11 4h5v1H11zM0 5h1v1H0zM9 5h1v1H9zM15 5h1v1H15zM0 6h1v1H0zM9 6h1v1H9zM15 6h1v1H15zM0 7h10v1H0zM15 7h1v1H15zM2 8h4v1H2zM9 8h1v1H9zM15 8h1v1H15zM1 9h1v1H1zM6 9h4v1H6zM15 9h1v1H15zM1 10h1v1H1zM6 10h1v1H6zM9 10h1v1H9zM15 10h1v1H15zM2 11h5v1H2zM9 11h6v1H9zM6 12h4v1H6z"/><path fill="#008000" d="M1 1h5v1H1zM10 1h5v1H10zM1 2h4v1H1zM6 2h4v1H6zM11 2h4v1H11zM1 3h1v1H1zM3 3h2v1H3zM6 3h7v1H6zM14 3h1v1H14zM1 4h5v1H1zM10 4h1v1H10zM1 5h8v1H1zM1 6h4v1H1z"/><path fill="#fff" d="M6 1h4v1H6zM5 2h1v1H5zM10 2h1v1H10zM2 3h1v1H2zM5 3h1v1H5zM13 3h1v1H13zM6 4h4v1H6zM5 6h4v1H5z"/><path fill="#ffff00" d="M10 5h5v1H10zM10 7h5v1H10zM2 9h4v1H2zM10 9h5v1H10zM7 10h2v1H7z"/><path fill="#808000" d="M10 6h5v1H10zM10 8h5v1H10zM2 10h4v1H2zM10 10h5v1H10zM7 11h2v1H7z"/></svg>
<svg style="left:436px;top:79px" width="6" height="5" viewBox="0 0 6 5" shape-rendering="crispEdges"><path fill="#000080" d="M2 0h1v1H2zM1 1h2v1H1zM0 2h5v1H0zM1 3h2v1H1zM2 4h1v1H2z"/></svg>
<svg style="left:458px;top:86px" width="6" height="5" viewBox="0 0 6 5" shape-rendering="crispEdges"><path fill="#000080" d="M3 0h1v1H3zM3 1h2v1H3zM0 2h6v1H0zM3 3h2v1H3zM3 4h1v1H3z"/></svg>
<svg style="left:487px;top:78px" width="16" height="14" viewBox="0 0 16 14" shape-rendering="crispEdges"><path fill="#000" d="M6 0h1v1H6zM8 0h1v1H8zM10 0h1v1H10zM12 0h1v1H12zM6 2h10v1H6zM6 4h7v1H6zM7 6h9v1H7zM6 8h7v1H6zM6 10h10v1H6zM6 12h1v1H6zM8 12h1v1H8zM10 12h1v1H10zM12 12h1v1H12z"/><path fill="#000080" d="M3 4h1v1H3zM2 5h2v1H2zM1 6h6v1H1zM2 7h2v1H2zM3 8h1v1H3z"/></svg>
<svg style="left:510px;top:78px" width="16" height="14" viewBox="0 0 16 14" shape-rendering="crispEdges"><path fill="#000" d="M6 0h1v1H6zM8 0h1v1H8zM10 0h1v1H10zM12 0h1v1H12zM6 2h10v1H6zM6 4h7v1H6zM6 6h10v1H6zM6 8h7v1H6zM6 10h10v1H6zM6 12h1v1H6zM8 12h1v1H8zM10 12h1v1H10zM12 12h1v1H12z"/><path fill="#000080" d="M2 4h1v1H2zM2 5h2v1H2zM0 6h5v1H0zM2 7h2v1H2zM2 8h1v1H2z"/></svg>
<svg style="left:541px;top:79px" width="13" height="14" viewBox="0 0 13 14" shape-rendering="crispEdges"><path fill="#808080" d="M0 0h1v1H0zM2 0h1v1H2zM4 0h1v1H4zM6 0h1v1H6zM8 0h1v1H8zM10 0h1v1H10zM12 0h1v1H12zM0 2h1v1H0zM6 2h1v1H6zM12 2h1v1H12zM0 4h1v1H0zM6 4h1v1H6zM12 4h1v1H12zM0 6h1v1H0zM2 6h1v1H2zM4 6h1v1H4zM6 6h1v1H6zM8 6h1v1H8zM10 6h1v1H10zM12 6h1v1H12zM0 8h1v1H0zM6 8h1v1H6zM12 8h1v1H12zM0 10h1v1H0zM6 10h1v1H6zM12 10h1v1H12z"/><path fill="#000" d="M0 12h13v1H0zM0 13h13v1H0z"/></svg>
<svg style="left:561px;top:85px" width="5" height="3" viewBox="0 0 5 3" shape-rendering="crispEdges" ><path d="M0 0h5v1H0zM1 1h3v1H1zM2 2h1v1H2z" fill="#000"/></svg>
<svg style="left:575px;top:78px" width="13" height="12" viewBox="0 0 13 12" shape-rendering="crispEdges"><path fill="#000" d="M4 0h3v1H4zM3 1h1v1H3zM7 1h1v1H7zM3 2h1v1H3zM5 2h1v1H5zM3 3h2v1H3zM6 3h1v1H6zM2 4h2v1H2zM7 4h1v1H7zM1 5h1v1H1zM3 5h1v1H3zM8 5h1v1H8zM0 6h1v1H0zM4 6h1v1H4zM9 6h1v1H9zM1 7h1v1H1zM9 7h1v1H9zM2 8h1v1H2zM8 8h1v1H8zM3 9h1v1H3zM7 9h1v1H7zM4 10h1v1H4zM6 10h1v1H6zM5 11h1v1H5z"/><path fill="#000080" d="M6 1h1v1H6zM6 2h3v1H6zM7 3h3v1H7zM8 4h3v1H8zM9 5h2v1H9zM10 6h2v1H10zM10 7h2v1H10zM10 8h2v1H10zM10 9h1v1H10z"/><path fill="#fff" d="M5 3h1v1H5zM4 4h3v1H4zM2 5h1v1H2zM4 5h2v1H4zM1 6h3v1H1zM2 7h2v1H2z"/><path fill="#c0c0c0" d="M6 5h2v1H6zM5 6h4v1H5zM4 7h4v1H4zM3 8h4v1H3zM4 9h2v1H4z"/><path fill="#808080" d="M8 7h1v1H8zM7 8h1v1H7zM6 9h1v1H6zM5 10h1v1H5z"/></svg>
<div style="left:573px;top:90px;width:16px;height:4px;background:#ffff00;"></div>
<svg style="left:595px;top:85px" width="5" height="3" viewBox="0 0 5 3" shape-rendering="crispEdges" ><path d="M0 0h5v1H0zM1 1h3v1H1zM2 2h1v1H2z" fill="#000"/></svg>
<div style="left:607px;top:90px;width:16px;height:4px;background:#ff0000;"></div>
<svg style="left:629px;top:85px" width="5" height="3" viewBox="0 0 5 3" shape-rendering="crispEdges" ><path d="M0 0h5v1H0zM1 1h3v1H1zM2 2h1v1H2z" fill="#000"/></svg>
<svg style="left:3px;top:4px" width="19" height="13" viewBox="0 0 19 13" shape-rendering="crispEdges"><path fill="#000" d="M0 0h8v1H0zM13 0h6v1H13zM1 1h1v1H1zM8 1h1v1H8zM12 1h1v1H12zM17 1h1v1H17zM2 2h1v1H2zM9 2h1v1H9zM11 2h1v1H11zM15 2h1v1H15zM3 3h1v1H3zM10 3h1v1H10zM14 3h1v1H14zM4 4h1v1H4zM13 4h1v1H13zM5 5h1v1H5zM12 5h1v1H12zM6 6h1v1H6zM13 6h1v1H13zM5 7h1v1H5zM7 7h1v1H7zM14 7h1v1H14zM4 8h1v1H4zM7 8h2v1H7zM15 8h1v1H15zM3 9h1v1H3zM7 9h1v1H7zM9 9h1v1H9zM16 9h1v1H16zM2 10h1v1H2zM6 10h1v1H6zM10 10h1v1H10zM17 10h1v1H17zM1 11h1v1H1zM6 11h1v1H6zM11 11h1v1H11zM18 11h1v1H18zM0 12h7v1H0zM12 12h7v1H12z"/><path fill="#00ffff" d="M2 1h5v1H2zM3 2h5v1H3zM4 3h5v1H4zM5 4h5v1H5zM6 5h5v1H6zM7 6h5v1H7zM8 7h5v1H8zM9 8h5v1H9zM10 9h5v1H10zM11 10h5v1H11zM12 11h5v1H12z"/><path fill="#fff" d="M7 1h1v1H7zM8 2h1v1H8zM9 3h1v1H9zM10 4h1v1H10zM11 5h1v1H11zM12 6h1v1H12zM13 7h1v1H13zM14 8h1v1H14zM15 9h1v1H15zM16 10h1v1H16zM17 11h1v1H17z"/><path fill="#008080" d="M13 1h4v1H13zM12 2h3v1H12zM11 3h3v1H11zM11 4h2v1H11zM6 7h1v1H6zM5 8h2v1H5zM4 9h3v1H4zM3 10h3v1H3zM2 11h4v1H2z"/></svg>
<svg style="left:11px;top:26px" width="18" height="17" viewBox="0 0 18 17" shape-rendering="crispEdges"><path fill="#000" d="M3 0h11v1H3zM3 1h1v1H3zM13 1h2v1H13zM3 2h1v1H3zM13 2h1v1H13zM15 2h1v1H15zM0 3h2v1H0zM3 3h2v1H3zM13 3h4v1H13zM1 4h1v1H1zM3 4h1v1H3zM16 4h1v1H16zM2 5h1v1H2zM4 5h1v1H4zM16 5h1v1H16zM3 6h1v1H3zM5 6h1v1H5zM16 6h1v1H16zM2 7h3v1H2zM6 7h1v1H6zM16 7h1v1H16zM0 8h2v1H0zM3 8h1v1H3zM5 8h2v1H5zM16 8h1v1H16zM3 9h1v1H3zM16 9h1v1H16zM3 10h1v1H3zM16 10h1v1H16zM3 11h1v1H3zM16 11h1v1H16zM3 12h1v1H3zM16 12h1v1H16zM3 13h1v1H3zM16 13h1v1H16zM3 14h1v1H3zM16 14h1v1H16zM3 15h1v1H3zM16 15h1v1H16zM3 16h14v1H3z"/><path fill="#fff" d="M4 1h9v1H4zM4 2h9v1H4zM14 2h1v1H14zM5 3h1v1H5zM8 3h1v1H8zM11 3h2v1H11zM4 4h12v1H4zM5 5h1v1H5zM8 5h1v1H8zM11 5h1v1H11zM14 5h2v1H14zM6 6h10v1H6zM8 7h1v1H8zM11 7h1v1H11zM14 7h2v1H14zM4 8h1v1H4zM7 8h9v1H7zM4 9h1v1H4zM7 9h1v1H7zM10 9h1v1H10zM13 9h3v1H13zM4 10h12v1H4zM4 11h1v1H4zM7 11h1v1H7zM10 11h1v1H10zM13 11h3v1H13zM4 12h12v1H4zM4 13h1v1H4zM7 13h1v1H7zM10 13h1v1H10zM13 13h3v1H13zM4 14h12v1H4zM4 15h12v1H4z"/><path fill="#c0c0c0" d="M6 3h2v1H6zM9 3h2v1H9zM6 5h2v1H6zM9 5h2v1H9zM12 5h2v1H12zM7 7h1v1H7zM9 7h2v1H9zM12 7h2v1H12zM5 9h2v1H5zM8 9h2v1H8zM11 9h2v1H11zM5 11h2v1H5zM8 11h2v1H8zM11 11h2v1H11zM5 13h2v1H5zM8 13h2v1H8zM11 13h2v1H11z"/><path fill="#00ffff" d="M2 4h1v1H2zM3 5h1v1H3zM4 6h1v1H4zM5 7h1v1H5z"/><path fill="#008080" d="M2 6h1v1H2zM1 7h1v1H1z"/></svg>
<svg style="left:741px;top:14px" width="7" height="2" viewBox="0 0 7 2" shape-rendering="crispEdges"><path fill="#000" d="M0 0h7v1H0zM0 1h7v1H0z"/></svg>
<svg style="left:760px;top:5px" width="11" height="10" viewBox="0 0 11 10" shape-rendering="crispEdges"><path fill="#000" d="M3 0h8v1H3zM3 1h8v1H3zM3 2h1v1H3zM10 2h1v1H10zM0 3h8v1H0zM10 3h1v1H10zM0 4h8v1H0zM10 4h1v1H10zM0 5h1v1H0zM7 5h1v1H7zM10 5h1v1H10zM0 6h1v1H0zM7 6h4v1H7zM0 7h1v1H0zM7 7h1v1H7zM0 8h1v1H0zM7 8h1v1H7zM0 9h8v1H0z"/></svg>
<svg style="left:783px;top:7px" width="10" height="9" viewBox="0 0 10 9" shape-rendering="crispEdges"><path fill="#000" d="M0 0h2v1H0zM8 0h2v1H8zM1 1h2v1H1zM7 1h2v1H7zM2 2h2v1H2zM6 2h2v1H6zM3 3h4v1H3zM4 4h2v1H4zM3 5h4v1H3zM2 6h2v1H2zM6 6h2v1H6zM1 7h2v1H1zM7 7h2v1H7zM0 8h2v1H0zM8 8h2v1H8z"/></svg>
<svg style="left:747px;top:37px" width="6" height="2" viewBox="0 0 6 2" shape-rendering="crispEdges"><path fill="#000" d="M0 0h6v1H0zM0 1h6v1H0z"/></svg>
<svg style="left:764px;top:30px" width="8" height="9" viewBox="0 0 8 9" shape-rendering="crispEdges"><path fill="#000" d="M2 0h6v1H2zM2 1h6v1H2zM2 2h1v1H2zM7 2h1v1H7zM0 3h6v1H0zM7 3h1v1H7zM0 4h6v1H0zM7 4h1v1H7zM0 5h1v1H0zM5 5h3v1H5zM0 6h1v1H0zM5 6h1v1H5zM0 7h1v1H0zM5 7h1v1H5zM0 8h6v1H0z"/></svg>
<svg style="left:785px;top:31px" width="8" height="7" viewBox="0 0 8 7" shape-rendering="crispEdges"><path fill="#000" d="M0 0h2v1H0zM6 0h2v1H6zM1 1h2v1H1zM5 1h2v1H5zM2 2h4v1H2zM3 3h2v1H3zM2 4h4v1H2zM1 5h2v1H1zM5 5h2v1H5zM0 6h2v1H0zM6 6h2v1H6z"/></svg>
<div style="left:0px;top:99px;width:109px;height:17px;background:#fff;"></div>
<div style="left:0px;top:99px;width:1px;height:17px;background:#000;"></div>
<div style="left:109px;top:99px;width:13px;height:17px;background:#aebbdd;box-shadow:inset 1px 1px 0 #dfe6f6, inset -1px -1px 0 #1c2c66, inset -2px -2px 0 #4a6abb;"></div>
<svg style="left:113px;top:107px" width="5" height="3" viewBox="0 0 5 3" shape-rendering="crispEdges" ><path d="M0 0h5v1H0zM1 1h3v1H1zM2 2h1v1H2z" fill="#000"/></svg>
<div style="left:122px;top:99px;width:1px;height:17px;background:#dfe6f6;"></div>
<div style="left:167px;top:105px;width:7px;height:2px;background:#000;"></div>
<div style="left:167px;top:108px;width:7px;height:2px;background:#000;"></div>
<div style="left:178px;top:99px;width:1px;height:17px;background:#4a6abb;"></div>
<div style="left:179px;top:99px;width:621px;height:17px;background:#fff;"></div>
<div style="left:0px;top:117px;width:800px;height:403px;background:#fff;"></div>
<div style="left:0px;top:117px;width:1px;height:403px;background:#10183c;"></div>
<div style="left:1px;top:117px;width:1px;height:403px;background:#4a6abb;"></div>
<div style="left:54px;top:135px;width:1px;height:373px;background:#c0c0c0;"></div>
<div style="left:99px;top:135px;width:1px;height:373px;background:#c0c0c0;"></div>
<div style="left:330px;top:135px;width:1px;height:373px;background:#c0c0c0;"></div>
<div style="left:397px;top:135px;width:1px;height:373px;background:#c0c0c0;"></div>
<div style="left:452px;top:135px;width:1px;height:373px;background:#c0c0c0;"></div>
<div style="left:507px;top:135px;width:1px;height:373px;background:#c0c0c0;"></div>
<div style="left:594px;top:135px;width:1px;height:373px;background:#c0c0c0;"></div>
<div style="left:658px;top:135px;width:1px;height:373px;background:#c0c0c0;"></div>
<div style="left:722px;top:135px;width:1px;height:373px;background:#c0c0c0;"></div>
<div style="left:786px;top:135px;width:1px;height:373px;background:#c0c0c0;"></div>
<div style="left:28px;top:151px;width:758px;height:1px;background:#c0c0c0;"></div>
<div style="left:28px;top:168px;width:758px;height:1px;background:#c0c0c0;"></div>
<div style="left:28px;top:185px;width:758px;height:1px;background:#c0c0c0;"></div>
<div style="left:28px;top:202px;width:758px;height:1px;background:#c0c0c0;"></div>
<div style="left:28px;top:219px;width:758px;height:1px;background:#c0c0c0;"></div>
<div style="left:28px;top:236px;width:758px;height:1px;background:#c0c0c0;"></div>
<div style="left:28px;top:257px;width:758px;height:1px;background:#c0c0c0;"></div>
<div style="left:28px;top:274px;width:758px;height:1px;background:#c0c0c0;"></div>
<div style="left:28px;top:291px;width:758px;height:1px;background:#c0c0c0;"></div>
<div style="left:28px;top:308px;width:758px;height:1px;background:#c0c0c0;"></div>
<div style="left:28px;top:325px;width:758px;height:1px;background:#c0c0c0;"></div>
<div style="left:28px;top:370px;width:758px;height:1px;background:#c0c0c0;"></div>
<div style="left:28px;top:390px;width:758px;height:1px;background:#c0c0c0;"></div>
<div style="left:28px;top:410px;width:758px;height:1px;background:#c0c0c0;"></div>
<div style="left:28px;top:430px;width:758px;height:1px;background:#c0c0c0;"></div>
<div style="left:28px;top:450px;width:758px;height:1px;background:#c0c0c0;"></div>
<div style="left:28px;top:470px;width:758px;height:1px;background:#c0c0c0;"></div>
<div style="left:28px;top:490px;width:758px;height:1px;background:#c0c0c0;"></div>
<div style="left:28px;top:510px;width:758px;height:1px;background:#c0c0c0;"></div>
<div style="left:28px;top:135px;width:302px;height:16px;background:#fff;"></div>
<div style="left:28px;top:152px;width:302px;height:16px;background:#fff;"></div>
<div style="left:28px;top:169px;width:302px;height:16px;background:#fff;"></div>
<div style="left:28px;top:203px;width:302px;height:16px;background:#fff;"></div>
<div style="left:28px;top:237px;width:630px;height:20px;background:#fff;"></div>
<div style="left:28px;top:275px;width:630px;height:16px;background:#fff;"></div>
<div style="left:28px;top:292px;width:630px;height:16px;background:#fff;"></div>
<div style="left:2px;top:118px;width:784px;height:17px;background:#aebbdd;"></div>
<div style="left:0px;top:116px;width:800px;height:1px;background:#4a6abb;"></div>
<div style="left:0px;top:117px;width:798px;height:1px;background:#000;"></div>
<div style="left:2px;top:134px;width:784px;height:1px;background:#4a6abb;"></div>
<div style="left:28px;top:118px;width:1px;height:16px;background:#dfe6f6;"></div>
<div style="left:28px;top:118px;width:26px;height:1px;background:#dfe6f6;"></div>
<div style="left:54px;top:118px;width:1px;height:17px;background:#4a6abb;"></div>
<div style="left:55px;top:118px;width:1px;height:16px;background:#dfe6f6;"></div>
<div style="left:55px;top:118px;width:44px;height:1px;background:#dfe6f6;"></div>
<div style="left:99px;top:118px;width:1px;height:17px;background:#4a6abb;"></div>
<div style="left:100px;top:118px;width:1px;height:16px;background:#dfe6f6;"></div>
<div style="left:100px;top:118px;width:230px;height:1px;background:#dfe6f6;"></div>
<div style="left:330px;top:118px;width:1px;height:17px;background:#4a6abb;"></div>
<div style="left:100px;top:118px;width:230px;height:16px;background:#a8b6da;"></div>
<div style="left:99px;top:134px;width:232px;height:1px;background:#000;"></div>
<div style="left:330px;top:118px;width:1px;height:17px;background:#000;"></div>
<div style="left:331px;top:118px;width:1px;height:16px;background:#dfe6f6;"></div>
<div style="left:331px;top:118px;width:66px;height:1px;background:#dfe6f6;"></div>
<div style="left:397px;top:118px;width:1px;height:17px;background:#4a6abb;"></div>
<div style="left:398px;top:118px;width:1px;height:16px;background:#dfe6f6;"></div>
<div style="left:398px;top:118px;width:54px;height:1px;background:#dfe6f6;"></div>
<div style="left:452px;top:118px;width:1px;height:17px;background:#4a6abb;"></div>
<div style="left:453px;top:118px;width:1px;height:16px;background:#dfe6f6;"></div>
<div style="left:453px;top:118px;width:54px;height:1px;background:#dfe6f6;"></div>
<div style="left:507px;top:118px;width:1px;height:17px;background:#4a6abb;"></div>
<div style="left:508px;top:118px;width:1px;height:16px;background:#dfe6f6;"></div>
<div style="left:508px;top:118px;width:86px;height:1px;background:#dfe6f6;"></div>
<div style="left:594px;top:118px;width:1px;height:17px;background:#4a6abb;"></div>
<div style="left:595px;top:118px;width:1px;height:16px;background:#dfe6f6;"></div>
<div style="left:595px;top:118px;width:63px;height:1px;background:#dfe6f6;"></div>
<div style="left:658px;top:118px;width:1px;height:17px;background:#4a6abb;"></div>
<div style="left:659px;top:118px;width:1px;height:16px;background:#dfe6f6;"></div>
<div style="left:659px;top:118px;width:63px;height:1px;background:#dfe6f6;"></div>
<div style="left:722px;top:118px;width:1px;height:17px;background:#4a6abb;"></div>
<div style="left:723px;top:118px;width:1px;height:16px;background:#dfe6f6;"></div>
<div style="left:723px;top:118px;width:63px;height:1px;background:#dfe6f6;"></div>
<div style="left:786px;top:118px;width:1px;height:17px;background:#4a6abb;"></div>
<div style="left:2px;top:135px;width:26px;height:385px;background:#aebbdd;"></div>
<div style="left:27px;top:118px;width:1px;height:402px;background:#4a6abb;"></div>
<div style="left:2px;top:135px;width:25px;height:1px;background:#dfe6f6;"></div>
<div style="left:2px;top:135px;width:1px;height:16px;background:#dfe6f6;"></div>
<div style="left:2px;top:151px;width:26px;height:1px;background:#4a6abb;"></div>
<div style="left:2px;top:152px;width:25px;height:1px;background:#dfe6f6;"></div>
<div style="left:2px;top:152px;width:1px;height:16px;background:#dfe6f6;"></div>
<div style="left:2px;top:168px;width:26px;height:1px;background:#4a6abb;"></div>
<div style="left:2px;top:169px;width:25px;height:1px;background:#dfe6f6;"></div>
<div style="left:2px;top:169px;width:1px;height:16px;background:#dfe6f6;"></div>
<div style="left:2px;top:185px;width:26px;height:1px;background:#4a6abb;"></div>
<div style="left:2px;top:186px;width:25px;height:1px;background:#dfe6f6;"></div>
<div style="left:2px;top:186px;width:1px;height:16px;background:#dfe6f6;"></div>
<div style="left:2px;top:202px;width:26px;height:1px;background:#4a6abb;"></div>
<div style="left:2px;top:203px;width:25px;height:1px;background:#dfe6f6;"></div>
<div style="left:2px;top:203px;width:1px;height:16px;background:#dfe6f6;"></div>
<div style="left:2px;top:219px;width:26px;height:1px;background:#4a6abb;"></div>
<div style="left:2px;top:220px;width:25px;height:1px;background:#dfe6f6;"></div>
<div style="left:2px;top:220px;width:1px;height:16px;background:#dfe6f6;"></div>
<div style="left:2px;top:236px;width:26px;height:1px;background:#4a6abb;"></div>
<div style="left:2px;top:237px;width:25px;height:1px;background:#dfe6f6;"></div>
<div style="left:2px;top:237px;width:1px;height:20px;background:#dfe6f6;"></div>
<div style="left:2px;top:257px;width:26px;height:1px;background:#4a6abb;"></div>
<div style="left:2px;top:258px;width:25px;height:1px;background:#dfe6f6;"></div>
<div style="left:2px;top:258px;width:1px;height:16px;background:#dfe6f6;"></div>
<div style="left:2px;top:274px;width:26px;height:1px;background:#4a6abb;"></div>
<div style="left:2px;top:275px;width:25px;height:1px;background:#dfe6f6;"></div>
<div style="left:2px;top:275px;width:1px;height:16px;background:#dfe6f6;"></div>
<div style="left:2px;top:291px;width:26px;height:1px;background:#4a6abb;"></div>
<div style="left:2px;top:292px;width:25px;height:1px;background:#dfe6f6;"></div>
<div style="left:2px;top:292px;width:1px;height:16px;background:#dfe6f6;"></div>
<div style="left:2px;top:308px;width:26px;height:1px;background:#4a6abb;"></div>
<div style="left:2px;top:309px;width:25px;height:1px;background:#dfe6f6;"></div>
<div style="left:2px;top:309px;width:1px;height:16px;background:#dfe6f6;"></div>
<div style="left:2px;top:325px;width:26px;height:1px;background:#4a6abb;"></div>
<div style="left:2px;top:326px;width:25px;height:1px;background:#dfe6f6;"></div>
<div style="left:2px;top:326px;width:1px;height:44px;background:#dfe6f6;"></div>
<div style="left:2px;top:370px;width:26px;height:1px;background:#4a6abb;"></div>
<div style="left:2px;top:371px;width:25px;height:1px;background:#dfe6f6;"></div>
<div style="left:2px;top:371px;width:1px;height:19px;background:#dfe6f6;"></div>
<div style="left:2px;top:390px;width:26px;height:1px;background:#4a6abb;"></div>
<div style="left:2px;top:391px;width:25px;height:1px;background:#dfe6f6;"></div>
<div style="left:2px;top:391px;width:1px;height:19px;background:#dfe6f6;"></div>
<div style="left:2px;top:410px;width:26px;height:1px;background:#4a6abb;"></div>
<div style="left:2px;top:411px;width:25px;height:1px;background:#dfe6f6;"></div>
<div style="left:2px;top:411px;width:1px;height:19px;background:#dfe6f6;"></div>
<div style="left:2px;top:430px;width:26px;height:1px;background:#4a6abb;"></div>
<div style="left:3px;top:412px;width:24px;height:18px;background:#a8b6da;"></div>
<div style="left:2px;top:430px;width:26px;height:1px;background:#000;"></div>
<div style="left:27px;top:411px;width:1px;height:20px;background:#000;"></div>
<div style="left:2px;top:431px;width:25px;height:1px;background:#dfe6f6;"></div>
<div style="left:2px;top:431px;width:1px;height:19px;background:#dfe6f6;"></div>
<div style="left:2px;top:450px;width:26px;height:1px;background:#4a6abb;"></div>
<div style="left:2px;top:451px;width:25px;height:1px;background:#dfe6f6;"></div>
<div style="left:2px;top:451px;width:1px;height:19px;background:#dfe6f6;"></div>
<div style="left:2px;top:470px;width:26px;height:1px;background:#4a6abb;"></div>
<div style="left:2px;top:471px;width:25px;height:1px;background:#dfe6f6;"></div>
<div style="left:2px;top:471px;width:1px;height:19px;background:#dfe6f6;"></div>
<div style="left:2px;top:490px;width:26px;height:1px;background:#4a6abb;"></div>
<div style="left:2px;top:491px;width:25px;height:1px;background:#dfe6f6;"></div>
<div style="left:2px;top:491px;width:1px;height:19px;background:#dfe6f6;"></div>
<div style="left:2px;top:510px;width:26px;height:1px;background:#4a6abb;"></div>
<div style="left:2px;top:118px;width:1px;height:16px;background:#dfe6f6;"></div>
<div style="left:2px;top:118px;width:25px;height:1px;background:#dfe6f6;"></div>
<div style="left:28px;top:151px;width:303px;height:1px;background:#000;"></div>
<div style="left:54px;top:325px;width:1px;height:195px;background:#000;"></div>
<div style="left:99px;top:325px;width:1px;height:195px;background:#000;"></div>
<div style="left:330px;top:325px;width:1px;height:195px;background:#000;"></div>
<div style="left:397px;top:325px;width:1px;height:195px;background:#000;"></div>
<div style="left:452px;top:325px;width:1px;height:195px;background:#000;"></div>
<div style="left:507px;top:325px;width:1px;height:195px;background:#000;"></div>
<div style="left:594px;top:325px;width:1px;height:195px;background:#000;"></div>
<div style="left:658px;top:325px;width:1px;height:195px;background:#000;"></div>
<div style="left:28px;top:325px;width:631px;height:1px;background:#000;"></div>
<div style="left:28px;top:370px;width:631px;height:1px;background:#000;"></div>
<div style="left:28px;top:390px;width:631px;height:1px;background:#000;"></div>
<div style="left:28px;top:410px;width:631px;height:1px;background:#000;"></div>
<div style="left:28px;top:430px;width:631px;height:1px;background:#000;"></div>
<div style="left:28px;top:450px;width:631px;height:1px;background:#000;"></div>
<div style="left:28px;top:470px;width:631px;height:1px;background:#000;"></div>
<div style="left:28px;top:490px;width:631px;height:1px;background:#000;"></div>
<div style="left:100px;top:411px;width:230px;height:19px;border:1px solid #fff;box-sizing:border-box;"></div>
<div style="left:101px;top:412px;width:228px;height:17px;border:1px solid #000;box-sizing:border-box;"></div>
<div style="left:328px;top:428px;width:5px;height:5px;background:#000;"></div>
<div style="left:0px;top:508px;width:800px;height:12px;background:#aebbdd;"></div>
<div style="left:786px;top:118px;width:12px;height:390px;background:#cfdcf0;"></div>
<div style="left:798px;top:116px;width:2px;height:404px;background:#bac7e6;"></div>
<div style="left:786px;top:118px;width:12px;height:5px;background:#aebbdd;box-shadow:inset 1px 1px 0 #dfe6f6, inset -1px -1px 0 #4a6abb;"></div>
<div style="left:786px;top:123px;width:12px;height:1px;background:#000;"></div>
<div style="left:786px;top:124px;width:12px;height:12px;background:#aebbdd;box-shadow:inset 1px 1px 0 #dfe6f6, inset -1px -1px 0 #4a6abb;"></div>
<div style="left:786px;top:136px;width:12px;height:1px;background:#000;"></div>
<svg style="left:790px;top:129px" width="5" height="3" viewBox="0 0 5 3" shape-rendering="crispEdges" ><path d="M2 0h1v1H2zM1 1h3v1H1zM0 2h5v1H0z" fill="#000"/></svg>
<div style="left:786px;top:137px;width:12px;height:97px;background:#aebbdd;box-shadow:inset 1px 1px 0 #dfe6f6, inset -1px -1px 0 #4a6abb;"></div>
<div style="left:786px;top:234px;width:12px;height:1px;background:#000;"></div>
<div style="left:786px;top:497px;width:12px;height:11px;background:#aebbdd;box-shadow:inset 1px 1px 0 #dfe6f6, inset -1px -1px 0 #4a6abb;"></div>
<svg style="left:790px;top:501px" width="5" height="3" viewBox="0 0 5 3" shape-rendering="crispEdges" ><path d="M0 0h5v1H0zM1 1h3v1H1zM2 2h1v1H2z" fill="#000"/></svg>
<div style="left:478px;top:508px;width:308px;height:12px;background:#cfdcf0;"></div>
<div style="left:473px;top:508px;width:4px;height:12px;background:#aebbdd;box-shadow:inset 1px 1px 0 #dfe6f6, inset -1px -1px 0 #4a6abb;"></div>
<div style="left:477px;top:508px;width:1px;height:12px;background:#000;"></div>
<div style="left:478px;top:508px;width:12px;height:12px;background:#aebbdd;box-shadow:inset 1px 1px 0 #dfe6f6, inset -1px -1px 0 #4a6abb;"></div>
<svg style="left:482px;top:512px" width="3" height="5" viewBox="0 0 3 5" shape-rendering="crispEdges" ><path d="M2 0h1v5H2zM1 1h1v3H1zM0 2h1v1H0z" fill="#000"/></svg>
<div style="left:490px;top:508px;width:1px;height:12px;background:#000;"></div>
<div style="left:491px;top:508px;width:245px;height:12px;background:#aebbdd;box-shadow:inset 1px 1px 0 #dfe6f6, inset -1px -1px 0 #4a6abb;"></div>
<div style="left:736px;top:508px;width:1px;height:12px;background:#000;"></div>
<div style="left:769px;top:508px;width:11px;height:12px;background:#aebbdd;box-shadow:inset 1px 1px 0 #dfe6f6, inset -1px -1px 0 #4a6abb;"></div>
<svg style="left:773px;top:512px" width="3" height="5" viewBox="0 0 3 5" shape-rendering="crispEdges" ><path d="M0 0h1v5H0zM1 1h1v3H1zM2 2h1v1H2z" fill="#000"/></svg>
<div style="left:780px;top:508px;width:1px;height:12px;background:#000;"></div>
<div style="left:781px;top:508px;width:5px;height:12px;background:#aebbdd;box-shadow:inset 1px 1px 0 #dfe6f6, inset -1px -1px 0 #4a6abb;"></div>
<div style="left:786px;top:508px;width:14px;height:12px;background:#aebbdd;"></div>
<div style="left:786px;top:508px;width:12px;height:1px;background:#000;"></div>
<div style="left:786px;top:508px;width:1px;height:12px;background:#000;"></div>
<div style="left:2px;top:508px;width:12px;height:12px;background:#aebbdd;box-shadow:inset 1px 1px 0 #dfe6f6, inset -1px -1px 0 #4a6abb;"></div>
<div style="left:14px;top:508px;width:12px;height:12px;background:#aebbdd;box-shadow:inset 1px 1px 0 #dfe6f6, inset -1px -1px 0 #4a6abb;"></div>
<div style="left:26px;top:508px;width:12px;height:12px;background:#aebbdd;box-shadow:inset 1px 1px 0 #dfe6f6, inset -1px -1px 0 #4a6abb;"></div>
<div style="left:38px;top:508px;width:12px;height:12px;background:#aebbdd;box-shadow:inset 1px 1px 0 #dfe6f6, inset -1px -1px 0 #4a6abb;"></div>
<svg style="left:5px;top:511px" width="6" height="7" viewBox="0 0 6 7" shape-rendering="crispEdges" ><path d="M0 0h1v7H0zM4 0h1v7H4zM3 1h1v5H3zM2 2h1v3H2zM1 3h1v1H1z"/></svg>
<svg style="left:17px;top:511px" width="6" height="7" viewBox="0 0 6 7" shape-rendering="crispEdges" ><path d="M4 0h1v7H4zM3 1h1v5H3zM2 2h1v3H2zM1 3h1v1H1z"/></svg>
<svg style="left:29px;top:511px" width="6" height="7" viewBox="0 0 6 7" shape-rendering="crispEdges" ><path d="M1 0h1v7H1zM2 1h1v5H2zM3 2h1v3H3zM4 3h1v1H4z"/></svg>
<svg style="left:41px;top:511px" width="6" height="7" viewBox="0 0 6 7" shape-rendering="crispEdges" ><path d="M1 0h1v7H1zM2 1h1v5H2zM3 2h1v3H3zM4 3h1v1H4zM5 0h1v7H5z"/></svg>
<svg style="left:50px;top:508px" width="200" height="12" viewBox="0 0 200 12"><path d="M0.5 0L6 11.5H59.5L65 0Z" fill="#fff"/><path d="M0.5 0L6 11.5H59.5L65 0M59.5 11.5H139L145 0M136 8L138 11.5H179.5L185.5 0" fill="none" stroke="#000" stroke-width="1"/></svg>
<div style="left:0px;top:520px;width:800px;height:2px;background:#d0daf1;"></div>
<div style="left:0px;top:548px;width:589px;height:1px;background:#4a6abb;"></div>
<div style="left:0px;top:549px;width:800px;height:1px;background:#dfe6f6;"></div>
<div style="left:4px;top:525px;width:3px;height:21px;background:#aebbdd;box-shadow:inset 1px 1px 0 #dfe6f6, inset -1px -1px 0 #4a6abb;"></div>
<div style="left:7px;top:525px;width:3px;height:21px;background:#aebbdd;box-shadow:inset 1px 1px 0 #dfe6f6, inset -1px -1px 0 #4a6abb;"></div>
<svg style="left:73px;top:536px" width="5" height="3" viewBox="0 0 5 3" shape-rendering="crispEdges" ><path d="M0 0h5v1H0zM1 1h3v1H1zM2 2h1v1H2z" fill="#000"/></svg>
<svg style="left:215px;top:536px" width="5" height="3" viewBox="0 0 5 3" shape-rendering="crispEdges" ><path d="M0 0h5v1H0zM1 1h3v1H1zM2 2h1v1H2z" fill="#000"/></svg>
<div style="left:132px;top:525px;width:1px;height:21px;background:#4a6abb;"></div>
<div style="left:133px;top:525px;width:1px;height:21px;background:#dfe6f6;"></div>
<div style="left:366px;top:525px;width:1px;height:21px;background:#4a6abb;"></div>
<div style="left:367px;top:525px;width:1px;height:21px;background:#dfe6f6;"></div>
<div style="left:588px;top:522px;width:1px;height:27px;background:#4a6abb;"></div>
<svg style="left:91px;top:528px" width="11" height="16" viewBox="0 0 11 16" shape-rendering="crispEdges"><path fill="#000" d="M0 0h1v1H0zM0 1h2v1H0zM0 2h1v1H0zM2 2h1v1H2zM0 3h1v1H0zM3 3h1v1H3zM0 4h1v1H0zM4 4h1v1H4zM0 5h1v1H0zM5 5h1v1H5zM0 6h1v1H0zM6 6h1v1H6zM0 7h1v1H0zM7 7h1v1H7zM0 8h1v1H0zM8 8h1v1H8zM0 9h1v1H0zM6 9h4v1H6zM0 10h1v1H0zM3 10h1v1H3zM6 10h1v1H6zM0 11h1v1H0zM2 11h1v1H2zM4 11h1v1H4zM7 11h1v1H7zM0 12h2v1H0zM4 12h1v1H4zM7 12h1v1H7zM0 13h1v1H0zM5 13h1v1H5zM8 13h1v1H8zM5 14h1v1H5zM8 14h1v1H8zM6 15h2v1H6z"/><path fill="#fff" d="M1 2h1v1H1zM1 3h2v1H1zM1 4h3v1H1zM1 5h4v1H1zM1 6h5v1H1zM1 7h6v1H1zM1 8h7v1H1zM1 9h5v1H1zM1 10h2v1H1zM4 10h2v1H4zM1 11h1v1H1zM5 11h2v1H5zM5 12h2v1H5zM6 13h2v1H6zM6 14h2v1H6z"/></svg>
<svg style="left:111px;top:529px" width="14" height="14" viewBox="0 0 14 14" shape-rendering="crispEdges"><path fill="#4a70d0" d="M5 0h4v1H5zM11 0h1v1H11zM3 1h9v1H3zM2 2h3v1H2zM9 2h3v1H9zM1 3h3v1H1zM8 3h4v1H8zM1 4h2v1H1zM8 4h5v1H8zM0 5h3v1H0zM6 5h2v1H6zM0 6h2v1H0zM5 6h4v1H5zM12 6h2v1H12zM0 7h2v1H0zM5 7h4v1H5zM12 7h2v1H12zM0 8h3v1H0zM6 8h2v1H6zM11 8h3v1H11zM1 9h2v1H1zM11 9h2v1H11zM1 10h3v1H1zM10 10h3v1H10zM2 11h4v1H2zM8 11h4v1H8zM3 12h8v1H3zM5 13h4v1H5z"/></svg>
<svg style="left:230px;top:529px" width="13" height="13" viewBox="0 0 13 13" shape-rendering="crispEdges"><path fill="#000" d="M0 0h1v1H0zM1 1h1v1H1zM2 2h1v1H2zM3 3h1v1H3zM4 4h1v1H4zM5 5h1v1H5zM6 6h1v1H6zM7 7h1v1H7zM8 8h1v1H8zM9 9h1v1H9zM10 10h1v1H10zM11 11h1v1H11zM12 12h1v1H12z"/></svg>
<svg style="left:255px;top:530px" width="12" height="12" viewBox="0 0 12 12" shape-rendering="crispEdges"><path fill="#000" d="M0 0h1v1H0zM1 1h1v1H1zM2 2h1v1H2zM3 3h1v1H3zM4 4h1v1H4zM5 5h1v1H5zM9 5h1v1H9zM6 6h1v1H6zM8 6h2v1H8zM7 7h3v1H7zM6 8h5v1H6zM5 9h6v1H5zM10 10h1v1H10z"/></svg>
<svg style="left:275px;top:529px" width="15" height="12" viewBox="0 0 15 12" shape-rendering="crispEdges"><path fill="#000" d="M0 0h15v1H0zM0 1h1v1H0zM14 1h1v1H14zM0 2h1v1H0zM14 2h1v1H14zM0 3h1v1H0zM14 3h1v1H14zM0 4h1v1H0zM14 4h1v1H14zM0 5h1v1H0zM14 5h1v1H14zM0 6h1v1H0zM14 6h1v1H14zM0 7h1v1H0zM14 7h1v1H14zM0 8h1v1H0zM14 8h1v1H14zM0 9h1v1H0zM14 9h1v1H14zM0 10h1v1H0zM14 10h1v1H14zM0 11h15v1H0z"/></svg>
<svg style="left:298px;top:529px" width="16" height="11" viewBox="0 0 16 11" shape-rendering="crispEdges"><path fill="#000" d="M5 0h6v1H5zM3 1h2v1H3zM11 1h2v1H11zM2 2h1v1H2zM13 2h1v1H13zM1 3h1v1H1zM14 3h1v1H14zM0 4h1v1H0zM15 4h1v1H15zM0 5h1v1H0zM15 5h1v1H15zM0 6h1v1H0zM15 6h1v1H15zM1 7h1v1H1zM14 7h1v1H14zM2 8h1v1H2zM13 8h1v1H13zM3 9h2v1H3zM11 9h2v1H11zM5 10h6v1H5z"/></svg>
<svg style="left:321px;top:528px" width="15" height="14" viewBox="0 0 15 14" shape-rendering="crispEdges"><path fill="#000" d="M0 0h15v1H0zM0 1h1v1H0zM14 1h1v1H14zM0 2h1v1H0zM2 2h11v1H2zM14 2h1v1H14zM0 3h1v1H0zM14 3h1v1H14zM0 4h1v1H0zM2 4h11v1H2zM14 4h1v1H14zM0 5h1v1H0zM14 5h1v1H14zM0 6h1v1H0zM2 6h11v1H2zM14 6h1v1H14zM0 7h1v1H0zM14 7h1v1H14zM0 8h1v1H0zM2 8h11v1H2zM14 8h1v1H14zM0 9h1v1H0zM14 9h1v1H14zM0 10h1v1H0zM2 10h11v1H2zM14 10h1v1H14zM0 11h1v1H0zM14 11h1v1H14zM0 12h1v1H0zM14 12h1v1H14zM0 13h15v1H0z"/><path fill="#fff" d="M1 1h13v1H1zM1 2h1v1H1zM13 2h1v1H13zM1 3h13v1H1zM1 4h1v1H1zM13 4h1v1H13zM1 5h13v1H1zM1 6h1v1H1zM13 6h1v1H13zM1 7h13v1H1zM1 8h1v1H1zM13 8h1v1H13zM1 9h13v1H1zM1 10h1v1H1zM13 10h1v1H13zM1 11h13v1H1zM1 12h13v1H1z"/></svg>
<svg style="left:375px;top:528px" width="13" height="12" viewBox="0 0 13 12" shape-rendering="crispEdges"><path fill="#000" d="M4 0h3v1H4zM3 1h1v1H3zM7 1h1v1H7zM3 2h1v1H3zM5 2h1v1H5zM3 3h2v1H3zM6 3h1v1H6zM2 4h2v1H2zM7 4h1v1H7zM1 5h1v1H1zM3 5h1v1H3zM8 5h1v1H8zM0 6h1v1H0zM4 6h1v1H4zM9 6h1v1H9zM1 7h1v1H1zM9 7h1v1H9zM2 8h1v1H2zM8 8h1v1H8zM3 9h1v1H3zM7 9h1v1H7zM4 10h1v1H4zM6 10h1v1H6zM5 11h1v1H5z"/><path fill="#000080" d="M6 1h1v1H6zM6 2h3v1H6zM7 3h3v1H7zM8 4h3v1H8zM9 5h2v1H9zM10 6h2v1H10zM10 7h2v1H10zM10 8h2v1H10zM10 9h1v1H10z"/><path fill="#fff" d="M5 3h1v1H5zM4 4h3v1H4zM2 5h1v1H2zM4 5h2v1H4zM1 6h3v1H1zM2 7h2v1H2z"/><path fill="#c0c0c0" d="M6 5h2v1H6zM5 6h4v1H5zM4 7h4v1H4zM3 8h4v1H3zM4 9h2v1H4z"/><path fill="#808080" d="M8 7h1v1H8zM7 8h1v1H7zM6 9h1v1H6zM5 10h1v1H5z"/></svg>
<div style="left:373px;top:540px;width:16px;height:4px;background:#ffff00;"></div>
<svg style="left:395px;top:535px" width="5" height="3" viewBox="0 0 5 3" shape-rendering="crispEdges" ><path d="M0 0h5v1H0zM1 1h3v1H1zM2 2h1v1H2z" fill="#000"/></svg>
<svg style="left:411px;top:528px" width="13" height="11" viewBox="0 0 13 11" shape-rendering="crispEdges"><path fill="#000" d="M9 0h2v1H9zM8 1h1v1H8zM11 1h1v1H11zM7 2h1v1H7zM10 2h1v1H10zM6 3h1v1H6zM9 3h1v1H9zM5 4h1v1H5zM8 4h1v1H8zM4 5h2v1H4zM7 5h1v1H7zM3 6h1v1H3zM5 6h2v1H5zM2 7h1v1H2zM5 7h1v1H5zM4 8h1v1H4z"/><path fill="#fff" d="M9 1h1v1H9zM8 2h1v1H8z"/><path fill="#ffff00" d="M10 1h1v1H10zM9 2h1v1H9zM7 3h2v1H7zM6 4h2v1H6zM6 5h1v1H6z"/><path fill="#000080" d="M4 6h1v1H4zM3 7h2v1H3zM2 8h2v1H2zM1 9h2v1H1zM0 10h1v1H0z"/></svg>
<div style="left:407px;top:540px;width:16px;height:4px;background:#0000ff;"></div>
<svg style="left:429px;top:535px" width="5" height="3" viewBox="0 0 5 3" shape-rendering="crispEdges" ><path d="M0 0h5v1H0zM1 1h3v1H1zM2 2h1v1H2z" fill="#000"/></svg>
<div style="left:441px;top:540px;width:16px;height:4px;background:#ff0000;"></div>
<svg style="left:463px;top:535px" width="5" height="3" viewBox="0 0 5 3" shape-rendering="crispEdges" ><path d="M0 0h5v1H0zM1 1h3v1H1zM2 2h1v1H2z" fill="#000"/></svg>
<svg style="left:475px;top:530px" width="14" height="10" viewBox="0 0 14 10" shape-rendering="crispEdges"><path fill="#000" d="M0 0h14v1H0zM0 3h14v1H0zM0 4h14v1H0zM0 7h14v1H0zM0 8h14v1H0zM0 9h14v1H0z"/></svg>
<svg style="left:498px;top:530px" width="14" height="10" viewBox="0 0 14 10" shape-rendering="crispEdges"><path fill="#000" d="M0 0h14v1H0zM0 3h1v1H0zM2 3h1v1H2zM4 3h1v1H4zM6 3h1v1H6zM8 3h1v1H8zM10 3h1v1H10zM12 3h1v1H12zM0 6h2v1H0zM3 6h2v1H3zM6 6h2v1H6zM9 6h2v1H9zM12 6h2v1H12zM0 9h3v1H0zM4 9h3v1H4zM8 9h3v1H8zM12 9h2v1H12z"/></svg>
<svg style="left:522px;top:528px" width="15" height="14" viewBox="0 0 15 14" shape-rendering="crispEdges"><path fill="#000" d="M11 0h1v1H11zM11 1h2v1H11zM0 2h14v1H0zM0 3h14v1H0zM11 4h2v1H11zM11 5h1v1H11zM3 8h1v1H3zM2 9h2v1H2zM1 10h14v1H1zM1 11h14v1H1zM2 12h2v1H2zM3 13h1v1H3z"/></svg>
<svg style="left:545px;top:529px" width="13" height="13" viewBox="0 0 13 13" shape-rendering="crispEdges"><path fill="#000" d="M0 0h11v1H0zM0 1h1v1H0zM10 1h1v1H10zM0 2h1v1H0zM10 2h2v1H10zM0 3h1v1H0zM10 3h3v1H10zM0 4h1v1H0zM10 4h3v1H10zM0 5h1v1H0zM10 5h3v1H10zM0 6h1v1H0zM10 6h3v1H10zM0 7h1v1H0zM10 7h3v1H10zM0 8h1v1H0zM10 8h3v1H10zM0 9h1v1H0zM10 9h3v1H10zM0 10h13v1H0zM2 11h11v1H2zM3 12h10v1H3z"/><path fill="#008080" d="M1 1h9v1H1zM1 2h9v1H1zM1 3h9v1H1zM1 4h9v1H1zM1 5h9v1H1zM1 6h9v1H1zM1 7h9v1H1zM1 8h9v1H1zM1 9h9v1H1z"/></svg>
<svg style="left:567px;top:528px" width="16" height="15" viewBox="0 0 16 15" shape-rendering="crispEdges"><path fill="#000" d="M4 0h12v1H4zM3 1h1v1H3zM13 1h1v1H13zM15 1h1v1H15zM2 2h1v1H2zM12 2h1v1H12zM15 2h1v1H15zM1 3h1v1H1zM11 3h1v1H11zM15 3h1v1H15zM0 4h11v1H0zM15 4h1v1H15zM0 5h1v1H0zM10 5h1v1H10zM15 5h1v1H15zM0 6h1v1H0zM10 6h1v1H10zM15 6h1v1H15zM0 7h1v1H0zM10 7h1v1H10zM15 7h1v1H15zM0 8h1v1H0zM10 8h1v1H10zM15 8h1v1H15zM0 9h1v1H0zM10 9h1v1H10zM15 9h1v1H15zM0 10h1v1H0zM10 10h1v1H10zM15 10h1v1H15zM0 11h1v1H0zM10 11h1v1H10zM14 11h1v1H14zM0 12h1v1H0zM10 12h1v1H10zM13 12h1v1H13zM0 13h1v1H0zM10 13h1v1H10zM12 13h1v1H12zM0 14h12v1H0z"/><path fill="#fff" d="M4 1h9v1H4zM3 2h9v1H3zM2 3h9v1H2z"/><path fill="#c0c0c0" d="M14 1h1v1H14zM13 2h2v1H13zM12 3h3v1H12zM11 4h4v1H11zM11 5h4v1H11zM11 6h4v1H11zM11 7h4v1H11zM11 8h4v1H11zM11 9h4v1H11zM11 10h4v1H11zM11 11h3v1H11zM11 12h2v1H11zM11 13h1v1H11z"/><path fill="#008080" d="M1 5h9v1H1zM1 6h9v1H1zM1 7h9v1H1zM1 8h9v1H1zM1 9h9v1H1zM1 10h9v1H1zM1 11h9v1H1zM1 12h9v1H1zM1 13h9v1H1z"/></svg>
<div style="left:435px;top:552px;width:35px;height:15px;background:#aebbdd;box-shadow:inset 1px 1px 0 #4a6abb, inset -1px -1px 0 #dfe6f6;"></div>
<div style="left:472px;top:552px;width:130px;height:15px;background:#aebbdd;box-shadow:inset 1px 1px 0 #4a6abb, inset -1px -1px 0 #dfe6f6;"></div>
<div style="left:604px;top:552px;width:30px;height:15px;background:#aebbdd;box-shadow:inset 1px 1px 0 #4a6abb, inset -1px -1px 0 #dfe6f6;"></div>
<div style="left:636px;top:552px;width:34px;height:15px;background:#aebbdd;box-shadow:inset 1px 1px 0 #4a6abb, inset -1px -1px 0 #dfe6f6;"></div>
<div style="left:673px;top:552px;width:30px;height:15px;background:#aebbdd;box-shadow:inset 1px 1px 0 #4a6abb, inset -1px -1px 0 #dfe6f6;"></div>
<div style="left:705px;top:552px;width:33px;height:15px;background:#aebbdd;box-shadow:inset 1px 1px 0 #4a6abb, inset -1px -1px 0 #dfe6f6;"></div>
<div style="left:740px;top:552px;width:30px;height:15px;background:#aebbdd;box-shadow:inset 1px 1px 0 #4a6abb, inset -1px -1px 0 #dfe6f6;"></div>
<div style="left:773px;top:552px;width:23px;height:15px;background:#aebbdd;box-shadow:inset 1px 1px 0 #4a6abb, inset -1px -1px 0 #dfe6f6;"></div>
<div style="left:428px;top:551px;width:1px;height:17px;background:#4a6abb;"></div>
<div style="left:429px;top:551px;width:1px;height:17px;background:#dfe6f6;"></div>
<div style="left:0px;top:569px;width:800px;height:3px;background:#c3cfea;"></div>
<div class="gt"><div class="tf">
<span class="t " style="top:1.15px;font-size:14px;line-height:14px;left:-259.0px;width:600px;text-align:center;transform:scaleX(0.93);transform-origin:center center;">A</span>
<span class="t " style="top:1.15px;font-size:14px;line-height:14px;left:-223.0px;width:600px;text-align:center;transform:scaleX(0.93);transform-origin:center center;">B</span>
<span class="t " style="top:1.15px;font-size:14px;line-height:14px;left:-85.0px;width:600px;text-align:center;transform:scaleX(0.93);transform-origin:center center;font-weight:bold;">C</span>
<span class="t " style="top:1.15px;font-size:14px;line-height:14px;left:64.0px;width:600px;text-align:center;transform:scaleX(0.93);transform-origin:center center;">D</span>
<span class="t " style="top:1.15px;font-size:14px;line-height:14px;left:125.0px;width:600px;text-align:center;transform:scaleX(0.93);transform-origin:center center;">E</span>
<span class="t " style="top:1.15px;font-size:14px;line-height:14px;left:180.0px;width:600px;text-align:center;transform:scaleX(0.93);transform-origin:center center;">F</span>
<span class="t " style="top:1.15px;font-size:14px;line-height:14px;left:251.0px;width:600px;text-align:center;transform:scaleX(0.93);transform-origin:center center;">G</span>
<span class="t " style="top:1.15px;font-size:14px;line-height:14px;left:326.5px;width:600px;text-align:center;transform:scaleX(0.93);transform-origin:center center;">H</span>
<span class="t " style="top:1.15px;font-size:14px;line-height:14px;left:390.5px;width:600px;text-align:center;transform:scaleX(0.93);transform-origin:center center;">I</span>
<span class="t " style="top:1.15px;font-size:14px;line-height:14px;left:454.5px;width:600px;text-align:center;transform:scaleX(0.93);transform-origin:center center;">J</span>
<span class="t " style="top:18.15px;font-size:14px;line-height:14px;left:-285px;width:600px;text-align:center;transform:scaleX(0.93);transform-origin:center center;">1</span>
<span class="t " style="top:35.15px;font-size:14px;line-height:14px;left:-285px;width:600px;text-align:center;transform:scaleX(0.93);transform-origin:center center;">2</span>
<span class="t " style="top:52.15px;font-size:14px;line-height:14px;left:-285px;width:600px;text-align:center;transform:scaleX(0.93);transform-origin:center center;">3</span>
<span class="t " style="top:69.15px;font-size:14px;line-height:14px;left:-285px;width:600px;text-align:center;transform:scaleX(0.93);transform-origin:center center;">4</span>
<span class="t " style="top:86.15px;font-size:14px;line-height:14px;left:-285px;width:600px;text-align:center;transform:scaleX(0.93);transform-origin:center center;">5</span>
<span class="t " style="top:103.15px;font-size:14px;line-height:14px;left:-285px;width:600px;text-align:center;transform:scaleX(0.93);transform-origin:center center;">6</span>
<span class="t " style="top:124.15px;font-size:14px;line-height:14px;left:-285px;width:600px;text-align:center;transform:scaleX(0.93);transform-origin:center center;">7</span>
<span class="t " style="top:141.15px;font-size:14px;line-height:14px;left:-285px;width:600px;text-align:center;transform:scaleX(0.93);transform-origin:center center;">8</span>
<span class="t " style="top:158.15px;font-size:14px;line-height:14px;left:-285px;width:600px;text-align:center;transform:scaleX(0.93);transform-origin:center center;">9</span>
<span class="t " style="top:175.15px;font-size:14px;line-height:14px;left:-285px;width:600px;text-align:center;transform:scaleX(0.93);transform-origin:center center;">10</span>
<span class="t " style="top:192.15px;font-size:14px;line-height:14px;left:-285px;width:600px;text-align:center;transform:scaleX(0.93);transform-origin:center center;">11</span>
<span class="t " style="top:237.15px;font-size:14px;line-height:14px;left:-285px;width:600px;text-align:center;transform:scaleX(0.93);transform-origin:center center;">12</span>
<span class="t " style="top:257.15px;font-size:14px;line-height:14px;left:-285px;width:600px;text-align:center;transform:scaleX(0.93);transform-origin:center center;">13</span>
<span class="t " style="top:277.15px;font-size:14px;line-height:14px;left:-285px;width:600px;text-align:center;transform:scaleX(0.93);transform-origin:center center;">14</span>
<span class="t " style="top:297.15px;font-size:14px;line-height:14px;left:-285px;width:600px;text-align:center;transform:scaleX(0.93);transform-origin:center center;font-weight:bold;">15</span>
<span class="t " style="top:317.15px;font-size:14px;line-height:14px;left:-285px;width:600px;text-align:center;transform:scaleX(0.93);transform-origin:center center;">16</span>
<span class="t " style="top:337.15px;font-size:14px;line-height:14px;left:-285px;width:600px;text-align:center;transform:scaleX(0.93);transform-origin:center center;">17</span>
<span class="t " style="top:357.15px;font-size:14px;line-height:14px;left:-285px;width:600px;text-align:center;transform:scaleX(0.93);transform-origin:center center;">18</span>
<span class="t " style="top:377.15px;font-size:14px;line-height:14px;left:-285px;width:600px;text-align:center;transform:scaleX(0.93);transform-origin:center center;">19</span>
<span class="t " style="top:18.15px;font-size:14px;line-height:14px;left:-120px;width:600px;text-align:center;transform:scaleX(0.9455);transform-origin:center center;">ВПУ №9</span>
<span class="t " style="top:35.15px;font-size:14px;line-height:14px;left:-120.5px;width:600px;text-align:center;transform:scaleX(0.9212);transform-origin:center center;">(назва училища)</span>
<span class="t " style="top:52.15px;font-size:14px;line-height:14px;left:29.5px;transform:scaleX(0.9101);transform-origin:left center;">Директор</span>
<span class="t " style="top:52.15px;font-size:14px;line-height:14px;left:90px;transform:scaleX(0.8219);transform-origin:left center;">_______________</span>
<span class="t " style="top:52.15px;font-size:14px;line-height:14px;left:191.5px;transform:scaleX(0.9590);transform-origin:left center;">Г.Б. Хомік</span>
<span class="t " style="top:86.15px;font-size:14px;line-height:14px;left:29.5px;transform:scaleX(0.9377);transform-origin:left center;">Гол. бухгалтер</span>
<span class="t " style="top:86.15px;font-size:14px;line-height:14px;left:123px;transform:scaleX(0.7997);transform-origin:left center;">___________</span>
<span class="t " style="top:86.15px;font-size:14px;line-height:14px;left:195px;transform:scaleX(0.9816);transform-origin:left center;">Л.Ф. Зварич</span>
<span class="t " style="top:122.46px;font-size:16px;line-height:16px;left:42.80000000000001px;width:600px;text-align:center;transform:scaleX(0.9926);transform-origin:center center;font-weight:bold;">Відомість</span>
<span class="t " style="top:158.15px;font-size:14px;line-height:14px;left:29.5px;transform:scaleX(0.8723);transform-origin:left center;">на виплату стипендії учням  22  групи за січень місяць 2000 року</span>
<span class="t " style="top:158.15px;font-size:14px;line-height:14px;left:396px;transform:scaleX(0.8226);transform-origin:left center;">_____________________________________</span>
<span class="t " style="top:175.15px;font-size:14px;line-height:14px;left:30px;transform:scaleX(0.8239);transform-origin:left center;">______________________________________________________________________________________________</span>
<span class="t " style="top:256.46px;font-size:16px;line-height:16px;left:33.5px;transform:scaleX(0.9368);transform-origin:left center;">1.</span>
<span class="t " style="top:257.15px;font-size:14px;line-height:14px;left:-505px;width:600px;text-align:right;transform:scaleX(0.8706);transform-origin:right center;">17911</span>
<span class="t " style="top:257.15px;font-size:14px;line-height:14px;left:101px;transform:scaleX(0.9206);transform-origin:left center;">Баранович Тетяна Олександрівна</span>
<span class="t " style="top:257.15px;font-size:14px;line-height:14px;left:333px;transform:scaleX(0.8960);transform-origin:left center;">не атестат</span>
<span class="t " style="top:256.46px;font-size:16px;line-height:16px;left:180.3px;width:600px;text-align:center;transform:scaleX(0.9955);transform-origin:center center;">0,00</span>
<span class="t " style="top:276.46px;font-size:16px;line-height:16px;left:33.5px;transform:scaleX(0.9368);transform-origin:left center;">2.</span>
<span class="t " style="top:277.15px;font-size:14px;line-height:14px;left:-505px;width:600px;text-align:right;transform:scaleX(0.8475);transform-origin:right center;">17912</span>
<span class="t " style="top:277.15px;font-size:14px;line-height:14px;left:101px;transform:scaleX(0.9462);transform-origin:left center;">Бардюк Людмила Богданівна</span>
<span class="t " style="top:277.15px;font-size:14px;line-height:14px;left:333px;transform:scaleX(0.8960);transform-origin:left center;">не атестат</span>
<span class="t " style="top:276.46px;font-size:16px;line-height:16px;left:180.3px;width:600px;text-align:center;transform:scaleX(0.9955);transform-origin:center center;">0,00</span>
<span class="t " style="top:296.46px;font-size:16px;line-height:16px;left:33.5px;transform:scaleX(0.9368);transform-origin:left center;">3.</span>
<span class="t " style="top:297.15px;font-size:14px;line-height:14px;left:-505px;width:600px;text-align:right;transform:scaleX(0.8475);transform-origin:right center;">17913</span>
<span class="t " style="top:297.15px;font-size:14px;line-height:14px;left:101px;transform:scaleX(0.9349);transform-origin:left center;">Батов Артем Генадійович</span>
<span class="t " style="top:297.15px;font-size:14px;line-height:14px;left:333px;transform:scaleX(0.8960);transform-origin:left center;">не атестат</span>
<span class="t " style="top:296.46px;font-size:16px;line-height:16px;left:180.3px;width:600px;text-align:center;transform:scaleX(0.9955);transform-origin:center center;">0,00</span>
<span class="t " style="top:316.46px;font-size:16px;line-height:16px;left:33.5px;transform:scaleX(0.9368);transform-origin:left center;">4.</span>
<span class="t " style="top:317.15px;font-size:14px;line-height:14px;left:-505px;width:600px;text-align:right;transform:scaleX(0.8475);transform-origin:right center;">17914</span>
<span class="t " style="top:317.15px;font-size:14px;line-height:14px;left:101px;transform:scaleX(0.9424);transform-origin:left center;">Березюк Ольга Федорівна</span>
<span class="t " style="top:317.15px;font-size:14px;line-height:14px;left:333px;transform:scaleX(0.8960);transform-origin:left center;">не атестат</span>
<span class="t " style="top:316.46px;font-size:16px;line-height:16px;left:180.3px;width:600px;text-align:center;transform:scaleX(0.9955);transform-origin:center center;">0,00</span>
<span class="t " style="top:336.46px;font-size:16px;line-height:16px;left:33.5px;transform:scaleX(0.9368);transform-origin:left center;">5.</span>
<span class="t " style="top:337.15px;font-size:14px;line-height:14px;left:-505px;width:600px;text-align:right;transform:scaleX(0.8475);transform-origin:right center;">17915</span>
<span class="t " style="top:337.15px;font-size:14px;line-height:14px;left:101px;transform:scaleX(0.9309);transform-origin:left center;">Берник Олександра Олександрівна</span>
<span class="t " style="top:337.15px;font-size:14px;line-height:14px;left:333px;transform:scaleX(0.8960);transform-origin:left center;">не атестат</span>
<span class="t " style="top:336.46px;font-size:16px;line-height:16px;left:180.3px;width:600px;text-align:center;transform:scaleX(0.9955);transform-origin:center center;">0,00</span>
<span class="t " style="top:356.46px;font-size:16px;line-height:16px;left:33.5px;transform:scaleX(0.9368);transform-origin:left center;">6.</span>
<span class="t " style="top:357.15px;font-size:14px;line-height:14px;left:-505px;width:600px;text-align:right;transform:scaleX(0.8475);transform-origin:right center;">17916</span>
<span class="t " style="top:357.15px;font-size:14px;line-height:14px;left:101px;transform:scaleX(0.9349);transform-origin:left center;">Бугайчук Наталія Юріївна</span>
<span class="t " style="top:357.15px;font-size:14px;line-height:14px;left:333px;transform:scaleX(0.8960);transform-origin:left center;">не атестат</span>
<span class="t " style="top:356.46px;font-size:16px;line-height:16px;left:180.3px;width:600px;text-align:center;transform:scaleX(0.9955);transform-origin:center center;">0,00</span>
<span class="t " style="top:376.46px;font-size:16px;line-height:16px;left:33.5px;transform:scaleX(0.9368);transform-origin:left center;">7.</span>
<span class="t " style="top:377.15px;font-size:14px;line-height:14px;left:-505px;width:600px;text-align:right;transform:scaleX(0.8475);transform-origin:right center;">17917</span>
<span class="t " style="top:377.15px;font-size:14px;line-height:14px;left:101px;transform:scaleX(0.9214);transform-origin:left center;">Величко Діана Василівна</span>
<span class="t " style="top:377.15px;font-size:14px;line-height:14px;left:333px;transform:scaleX(0.8960);transform-origin:left center;">не атестат</span>
<span class="t " style="top:376.46px;font-size:16px;line-height:16px;left:180.3px;width:600px;text-align:center;transform:scaleX(0.9955);transform-origin:center center;">0,00</span>
</div></div>
<div class="gt"><div class="tf s">
<span class="t " style="top:216.69px;font-size:11px;line-height:11px;left:-259px;width:600px;text-align:center;transform:scaleX(1.0159);transform-origin:center center;">№</span>
<span class="t " style="top:231.69px;font-size:11px;line-height:11px;left:-259px;width:600px;text-align:center;transform:scaleX(1.0010);transform-origin:center center;">п/п</span>
<span class="t " style="top:209.69px;font-size:11px;line-height:11px;left:-223.5px;width:600px;text-align:center;transform:scaleX(0.9660);transform-origin:center center;">№ в</span>
<span class="t " style="top:224.69px;font-size:11px;line-height:11px;left:-223.5px;width:600px;text-align:center;transform:scaleX(0.9640);transform-origin:center center;">поімен.</span>
<span class="t " style="top:239.69px;font-size:11px;line-height:11px;left:-223.5px;width:600px;text-align:center;transform:scaleX(0.9376);transform-origin:center center;">книзі</span>
<span class="t " style="top:224.69px;font-size:11px;line-height:11px;left:-85.5px;width:600px;text-align:center;transform:scaleX(0.9926);transform-origin:center center;">Прізвище, ім'я, по батькові</span>
<span class="t " style="top:216.69px;font-size:11px;line-height:11px;left:63.5px;width:600px;text-align:center;transform:scaleX(0.9334);transform-origin:center center;">Середній</span>
<span class="t " style="top:231.69px;font-size:11px;line-height:11px;left:63.5px;width:600px;text-align:center;transform:scaleX(0.9681);transform-origin:center center;">бал</span>
<span class="t " style="top:216.69px;font-size:11px;line-height:11px;left:125px;width:600px;text-align:center;transform:scaleX(0.9887);transform-origin:center center;">Нарахо-</span>
<span class="t " style="top:231.69px;font-size:11px;line-height:11px;left:125px;width:600px;text-align:center;transform:scaleX(0.9571);transform-origin:center center;">вано</span>
<span class="t " style="top:216.69px;font-size:11px;line-height:11px;left:180px;width:600px;text-align:center;transform:scaleX(1.0017);transform-origin:center center;">Утри-</span>
<span class="t " style="top:231.69px;font-size:11px;line-height:11px;left:180px;width:600px;text-align:center;transform:scaleX(1.0821);transform-origin:center center;">мано</span>
<span class="t " style="top:216.69px;font-size:11px;line-height:11px;left:251px;width:600px;text-align:center;transform:scaleX(1.0085);transform-origin:center center;">До видачі на</span>
<span class="t " style="top:231.69px;font-size:11px;line-height:11px;left:251px;width:600px;text-align:center;transform:scaleX(1.0244);transform-origin:center center;">руки</span>
<span class="t " style="top:216.69px;font-size:11px;line-height:11px;left:325.5px;width:600px;text-align:center;transform:scaleX(0.9716);transform-origin:center center;">Розписка в</span>
<span class="t " style="top:231.69px;font-size:11px;line-height:11px;left:325.5px;width:600px;text-align:center;transform:scaleX(1.0106);transform-origin:center center;">отриманні</span>
</div></div>
<div class="ot"><div class="tf">
<span class="t " style="top:3.46px;font-size:16px;line-height:16px;left:25px;transform:scaleX(0.9864);transform-origin:left center;color:#fff;font-weight:bold;font-style:italic;">Microsoft Excel - Додаток до ПР №6</span>
<span class="t m" style="top:29.00px;font-size:13px;line-height:13px;left:35px;transform:scaleX(0.9071);transform-origin:left center;"><u>Ф</u>айл</span>
<span class="t m" style="top:29.00px;font-size:13px;line-height:13px;left:75px;transform:scaleX(0.8652);transform-origin:left center;"><u>П</u>равка</span>
<span class="t m" style="top:29.00px;font-size:13px;line-height:13px;left:123px;transform:scaleX(0.8924);transform-origin:left center;"><u>В</u>ид</span>
<span class="t m" style="top:29.00px;font-size:13px;line-height:13px;left:154px;transform:scaleX(0.9104);transform-origin:left center;">Вст<u>а</u>вка</span>
<span class="t m" style="top:29.00px;font-size:13px;line-height:13px;left:208px;transform:scaleX(0.9310);transform-origin:left center;">Фор<u>м</u>ат</span>
<span class="t m" style="top:29.00px;font-size:13px;line-height:13px;left:262px;transform:scaleX(0.8758);transform-origin:left center;"><u>С</u>ервис</span>
<span class="t m" style="top:29.00px;font-size:13px;line-height:13px;left:312px;transform:scaleX(0.8939);transform-origin:left center;"><u>Д</u>анные</span>
<span class="t m" style="top:29.00px;font-size:13px;line-height:13px;left:365px;transform:scaleX(0.9261);transform-origin:left center;"><u>О</u>кно</span>
<span class="t m" style="top:29.00px;font-size:13px;line-height:13px;left:405px;transform:scaleX(0.6911);transform-origin:left center;"><u>?</u></span>
<span class="t " style="top:52.30px;font-size:15px;line-height:15px;left:95.5px;width:600px;text-align:center;transform:scaleX(1.1449);transform-origin:center center;font-family:'Liberation Serif',serif;">Σ</span>
<span class="t " style="top:50.30px;font-size:15px;line-height:15px;left:411.5px;font-family:'Liberation Serif',serif;font-weight:bold;font-style:italic;">f</span>
<span class="t " style="top:56.00px;font-size:13px;line-height:13px;left:532px;font-family:'Liberation Serif',serif;font-weight:bold;color:#000080;font-style:italic;">A</span>
<span class="t " style="top:79.57px;font-size:13.5px;line-height:13.5px;left:-98.69999999999999px;width:600px;text-align:center;transform:scaleX(0.8608);transform-origin:center center;font-family:'Liberation Serif',serif;font-weight:bold;">Ж</span>
<span class="t " style="top:79.57px;font-size:13.5px;line-height:13.5px;left:-76px;width:600px;text-align:center;transform:scaleX(1.3106);transform-origin:center center;font-family:'Liberation Serif',serif;font-weight:bold;font-style:italic;">К</span>
<span class="t " style="top:79.57px;font-size:13.5px;line-height:13.5px;left:-52px;width:600px;text-align:center;transform:scaleX(1.0079);transform-origin:center center;font-family:'Liberation Serif',serif;font-weight:bold;">Ч</span>
<span class="t " style="top:80.00px;font-size:13px;line-height:13px;left:97.5px;width:600px;text-align:center;transform:scaleX(1.1243);transform-origin:center center;font-weight:bold;">%</span>
<span class="t " style="top:68.68px;font-size:24px;line-height:24px;left:119.5px;width:600px;text-align:center;font-family:'Liberation Serif',serif;font-weight:bold;">,</span>
<span class="t " style="top:76.30px;font-size:15px;line-height:15px;left:314px;width:600px;text-align:center;transform:scaleX(1.1066);transform-origin:center center;font-family:'Liberation Serif',serif;font-weight:bold;color:#000080;">A</span>
<span class="t " style="top:101.15px;font-size:14px;line-height:14px;left:184px;transform:scaleX(0.9161);transform-origin:left center;">=ЕСЛИ('Середній бал'!C9=0;&quot;&quot;;'Середній бал'!C9)</span>
<span class="t " style="top:530.00px;font-size:13px;line-height:13px;left:14.5px;transform:scaleX(0.9476);transform-origin:left center;">Де<u>й</u>ствия</span>
<span class="t " style="top:530.00px;font-size:13px;line-height:13px;left:141px;transform:scaleX(0.9326);transform-origin:left center;">Автофи<u>г</u>уры</span>
<span class="t " style="top:528.61px;font-size:17px;line-height:17px;left:346px;font-family:'Liberation Serif',serif;font-weight:bold;font-style:italic;color:#00c0c0;">A</span>
<span class="t " style="top:527.61px;font-size:17px;line-height:17px;left:344px;font-family:'Liberation Serif',serif;font-weight:bold;font-style:italic;color:#000080;">A</span>
<span class="t " style="top:526.30px;font-size:15px;line-height:15px;left:148.5px;width:600px;text-align:center;transform:scaleX(1.1066);transform-origin:center center;font-family:'Liberation Serif',serif;font-weight:bold;color:#000080;">A</span>
<span class="t " style="top:553.00px;font-size:13px;line-height:13px;left:7px;">Готово</span>
<span class="t " style="top:553.00px;font-size:13px;line-height:13px;left:675px;transform:scaleX(0.9119);transform-origin:left center;">NUM</span>
</div></div>
<div class="ot"><div class="tf s">
<span class="t " style="top:80.27px;font-size:11.5px;line-height:11.5px;left:13.5px;transform:scaleX(0.9298);transform-origin:left center;">Arial Cyr</span>
<span class="t " style="top:79.84px;font-size:12px;line-height:12px;left:147.5px;transform:scaleX(0.8234);transform-origin:left center;">10</span>
<span class="t " style="top:53.84px;font-size:12px;line-height:12px;left:562px;transform:scaleX(0.8794);transform-origin:left center;">100%</span>
<span class="t " style="top:53.69px;font-size:11px;line-height:11px;left:328px;width:600px;text-align:center;font-weight:bold;color:#000080;">?</span>
<span class="t " style="top:102.69px;font-size:11px;line-height:11px;left:-246px;width:600px;text-align:center;">C15</span>
</div></div>
<div class="ot"><div class="tf x">
<span class="t " style="top:56.53px;font-size:10px;line-height:10px;left:417.5px;font-family:'Liberation Serif',serif;font-weight:bold;font-style:italic;">x</span>
<span class="t " style="top:50.53px;font-size:10px;line-height:10px;left:138.5px;width:600px;text-align:center;font-family:'Liberation Serif',serif;font-weight:bold;color:#000080;">А</span>
<span class="t " style="top:59.53px;font-size:10px;line-height:10px;left:138.5px;width:600px;text-align:center;font-family:'Liberation Serif',serif;font-weight:bold;color:#800000;">Я</span>
<span class="t " style="top:50.53px;font-size:10px;line-height:10px;left:161.5px;width:600px;text-align:center;font-family:'Liberation Serif',serif;font-weight:bold;color:#800000;">Я</span>
<span class="t " style="top:59.53px;font-size:10px;line-height:10px;left:161.5px;width:600px;text-align:center;font-family:'Liberation Serif',serif;font-weight:bold;color:#000080;">А</span>
<span class="t " style="top:52.07px;font-size:7px;line-height:7px;left:135.5px;transform:scaleX(0.8610);transform-origin:left center;">АБВ</span>
<span class="t " style="top:81.23px;font-size:8px;line-height:8px;left:45px;width:600px;text-align:center;font-weight:bold;">a</span>
<span class="t " style="top:77.38px;font-size:9px;line-height:9px;left:442px;transform:scaleX(1.0644);transform-origin:left center;font-weight:bold;">,0</span>
<span class="t " style="top:84.38px;font-size:9px;line-height:9px;left:440px;transform:scaleX(0.9588);transform-origin:left center;font-weight:bold;">,00</span>
<span class="t " style="top:77.38px;font-size:9px;line-height:9px;left:461px;transform:scaleX(0.9588);transform-origin:left center;font-weight:bold;">,00</span>
<span class="t " style="top:84.38px;font-size:9px;line-height:9px;left:465px;transform:scaleX(1.0644);transform-origin:left center;font-weight:bold;">,0</span>
<span class="t " style="top:508.11px;font-size:10.5px;line-height:10.5px;left:57.5px;transform:scaleX(0.9309);transform-origin:left center;font-weight:bold;-webkit-text-stroke:0.3px #000;">Відомість</span>
<span class="t " style="top:508.54px;font-size:10px;line-height:10px;left:122.5px;transform:scaleX(0.9115);transform-origin:left center;">Середній бал</span>
<span class="t " style="top:508.54px;font-size:10px;line-height:10px;left:197.5px;transform:scaleX(0.9525);transform-origin:left center;">Лист3</span>
</div></div>
</div></body></html>
